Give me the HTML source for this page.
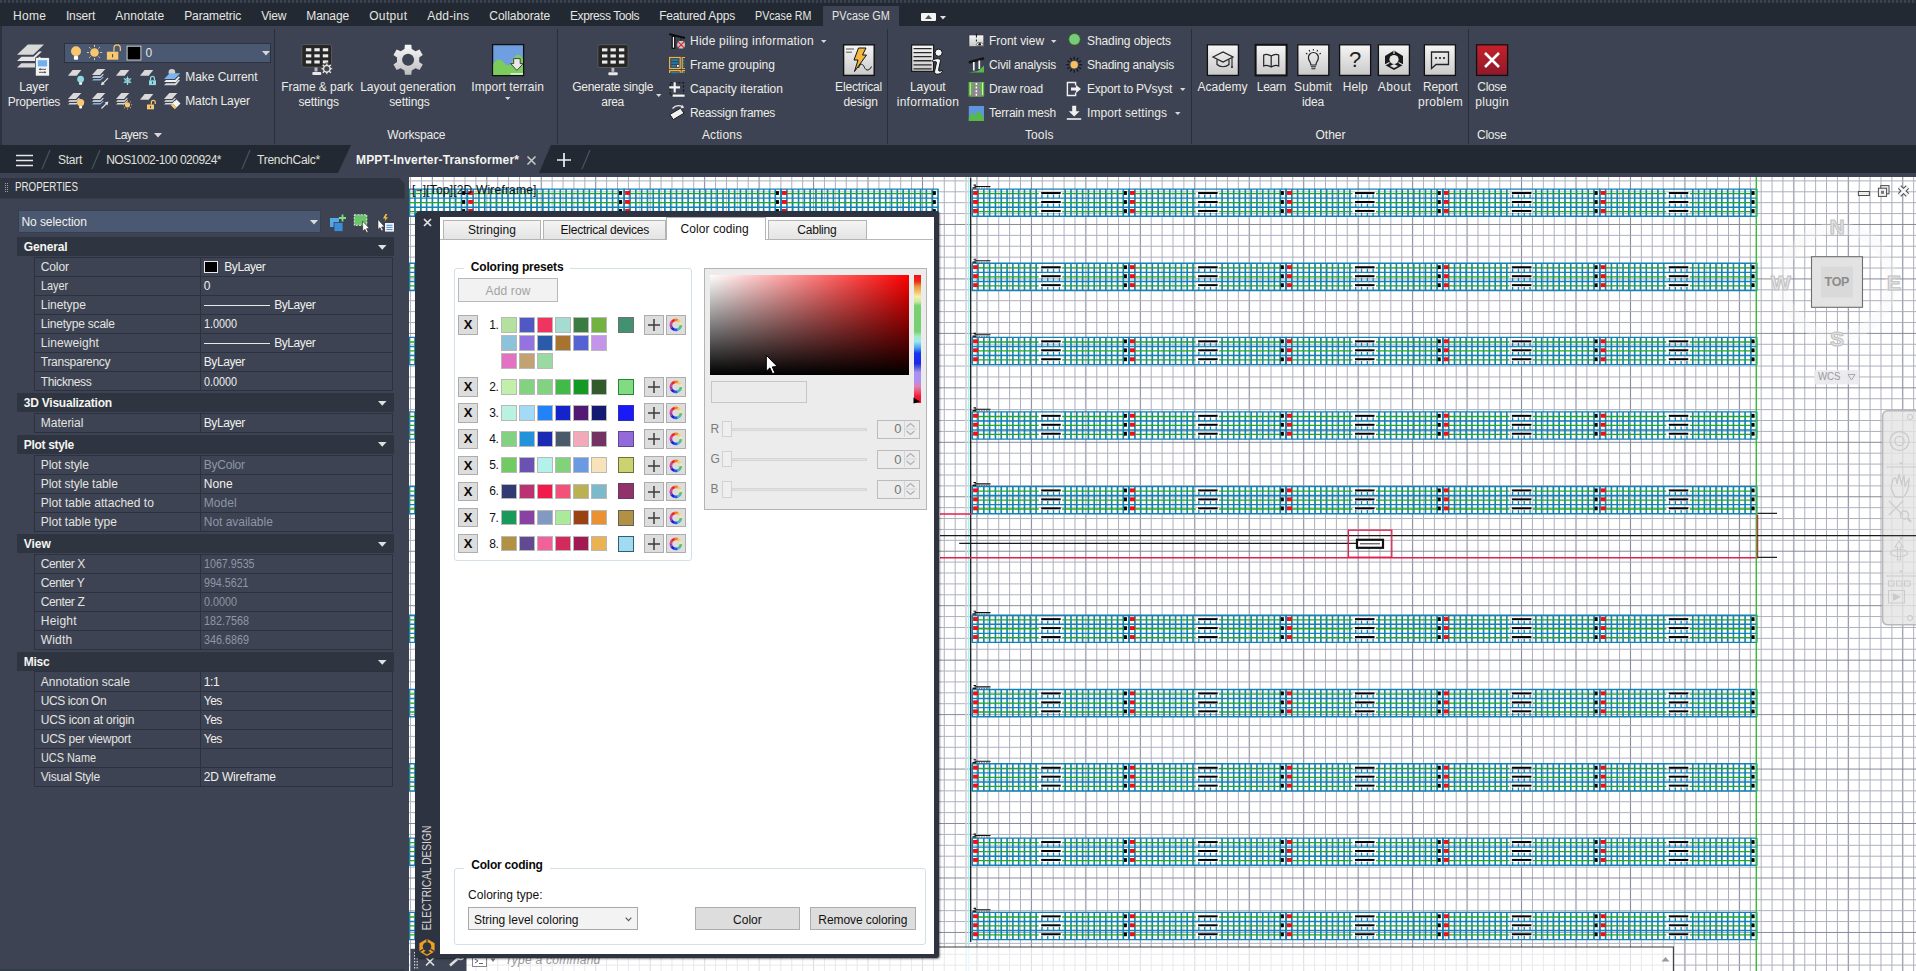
<!DOCTYPE html><html><head><meta charset="utf-8"><title>AutoCAD</title><style>html,body{margin:0;padding:0}body{width:1916px;height:971px;overflow:hidden;background:#3d4353;position:relative;font-family:"Liberation Sans",sans-serif;font-size:12px}
.a{position:absolute;display:block}.t{position:absolute;white-space:nowrap;display:block}svg{overflow:visible}</style></head><body>
<svg class="a" style="left:409.00px;top:176.00px;overflow:hidden;" width="1507" height="795" viewBox="0 0 1507 795"><defs><pattern id="gr" x="-472.246" y="-283.746" width="54.460" height="54.460" patternUnits="userSpaceOnUse"><path d="M5.446 0V54.460" stroke="#868899" stroke-width="1.1"/><path d="M16.338 0V54.460" stroke="#adafbd" stroke-width="1.0"/><path d="M27.230 0V54.460" stroke="#adafbd" stroke-width="1.0"/><path d="M38.122 0V54.460" stroke="#adafbd" stroke-width="1.0"/><path d="M49.014 0V54.460" stroke="#adafbd" stroke-width="1.0"/><path d="M0 5.446H54.460" stroke="#868899" stroke-width="1.1"/><path d="M0 16.338H54.460" stroke="#adafbd" stroke-width="1.0"/><path d="M0 27.230H54.460" stroke="#adafbd" stroke-width="1.0"/><path d="M0 38.122H54.460" stroke="#adafbd" stroke-width="1.0"/><path d="M0 49.014H54.460" stroke="#adafbd" stroke-width="1.0"/></pattern><g id="tb"><path d="M0.00 0.00V27.20" stroke="#1482b4" stroke-width="1.65"/><path d="M5.81 0.00V27.20" stroke="#1482b4" stroke-width="1.65"/><path d="M11.62 0.00V27.20" stroke="#1482b4" stroke-width="1.65"/><path d="M17.43 0.00V27.20" stroke="#1482b4" stroke-width="1.65"/><path d="M23.24 0.00V27.20" stroke="#1482b4" stroke-width="1.65"/><path d="M29.05 0.00V27.20" stroke="#1482b4" stroke-width="1.65"/><path d="M34.87 0.00V27.20" stroke="#1482b4" stroke-width="1.65"/><path d="M40.68 0.00V27.20" stroke="#1482b4" stroke-width="1.65"/><path d="M46.49 0.00V27.20" stroke="#1482b4" stroke-width="1.65"/><path d="M52.30 0.00V27.20" stroke="#1482b4" stroke-width="1.65"/><path d="M58.11 0.00V27.20" stroke="#1482b4" stroke-width="1.65"/><path d="M63.92 0.00V27.20" stroke="#1482b4" stroke-width="1.65"/><path d="M69.73 5.47V9.07" stroke="#1482b4" stroke-width="1.3"/><path d="M69.73 14.54V18.14" stroke="#1482b4" stroke-width="1.3"/><path d="M69.73 23.61V27.21" stroke="#1482b4" stroke-width="1.3"/><path d="M75.54 5.47V9.07" stroke="#1482b4" stroke-width="1.3"/><path d="M75.54 14.54V18.14" stroke="#1482b4" stroke-width="1.3"/><path d="M75.54 23.61V27.21" stroke="#1482b4" stroke-width="1.3"/><path d="M81.35 5.47V9.07" stroke="#1482b4" stroke-width="1.3"/><path d="M81.35 14.54V18.14" stroke="#1482b4" stroke-width="1.3"/><path d="M81.35 23.61V27.21" stroke="#1482b4" stroke-width="1.3"/><path d="M87.16 5.47V9.07" stroke="#1482b4" stroke-width="1.3"/><path d="M87.16 14.54V18.14" stroke="#1482b4" stroke-width="1.3"/><path d="M87.16 23.61V27.21" stroke="#1482b4" stroke-width="1.3"/><path d="M92.98 0.00V27.20" stroke="#1482b4" stroke-width="1.65"/><path d="M98.79 0.00V27.20" stroke="#1482b4" stroke-width="1.65"/><path d="M104.60 0.00V27.20" stroke="#1482b4" stroke-width="1.65"/><path d="M110.41 0.00V27.20" stroke="#1482b4" stroke-width="1.65"/><path d="M116.22 0.00V27.20" stroke="#1482b4" stroke-width="1.65"/><path d="M122.03 0.00V27.20" stroke="#1482b4" stroke-width="1.65"/><path d="M127.84 0.00V27.20" stroke="#1482b4" stroke-width="1.65"/><path d="M133.65 0.00V27.20" stroke="#1482b4" stroke-width="1.65"/><path d="M139.46 0.00V27.20" stroke="#1482b4" stroke-width="1.65"/><path d="M145.28 0.00V27.20" stroke="#1482b4" stroke-width="1.65"/><path d="M151.09 0.00V27.20" stroke="#1482b4" stroke-width="1.65"/><path d="M156.90 0.00V27.20" stroke="#1482b4" stroke-width="1.65"/><path d="M-0.50 0.00H157.40" stroke="#1482b4" stroke-width="1.4"/><path d="M-0.50 9.07H157.40" stroke="#1482b4" stroke-width="1.4"/><path d="M-0.50 18.14H157.40" stroke="#1482b4" stroke-width="1.4"/><path d="M-0.50 27.21H157.40" stroke="#1482b4" stroke-width="1.4"/><path d="M3.00 4.60H66.50M90.00 4.60H154.90" stroke="#22aa22" stroke-width="1.3"/><path d="M69.00 3.95H88.50" stroke="#000" stroke-width="2"/><rect x="0.90" y="1.90" width="5" height="3.9" fill="#f01010"/><rect x="151.70" y="2.00" width="3" height="3.8" fill="#000"/><path d="M3.00 13.55H66.50M90.00 13.55H154.90" stroke="#22aa22" stroke-width="1.3"/><path d="M69.00 12.90H88.50" stroke="#000" stroke-width="2"/><rect x="0.90" y="10.90" width="5" height="3.9" fill="#f01010"/><rect x="151.70" y="11.00" width="3" height="3.8" fill="#000"/><path d="M3.00 22.50H66.50M90.00 22.50H154.90" stroke="#22aa22" stroke-width="1.3"/><path d="M69.00 21.85H88.50" stroke="#000" stroke-width="2"/><rect x="0.90" y="19.90" width="5" height="3.9" fill="#f01010"/><rect x="151.70" y="20.00" width="3" height="3.8" fill="#000"/></g><g id="tn"><path d="M0.00 0.00V27.20" stroke="#1482b4" stroke-width="1.65"/><path d="M5.81 0.00V27.20" stroke="#1482b4" stroke-width="1.65"/><path d="M11.62 0.00V27.20" stroke="#1482b4" stroke-width="1.65"/><path d="M17.43 0.00V27.20" stroke="#1482b4" stroke-width="1.65"/><path d="M23.24 0.00V27.20" stroke="#1482b4" stroke-width="1.65"/><path d="M29.05 0.00V27.20" stroke="#1482b4" stroke-width="1.65"/><path d="M34.87 0.00V27.20" stroke="#1482b4" stroke-width="1.65"/><path d="M40.68 0.00V27.20" stroke="#1482b4" stroke-width="1.65"/><path d="M46.49 0.00V27.20" stroke="#1482b4" stroke-width="1.65"/><path d="M52.30 0.00V27.20" stroke="#1482b4" stroke-width="1.65"/><path d="M58.11 0.00V27.20" stroke="#1482b4" stroke-width="1.65"/><path d="M63.92 0.00V27.20" stroke="#1482b4" stroke-width="1.65"/><path d="M69.73 0.00V27.20" stroke="#1482b4" stroke-width="1.65"/><path d="M75.54 0.00V27.20" stroke="#1482b4" stroke-width="1.65"/><path d="M81.35 0.00V27.20" stroke="#1482b4" stroke-width="1.65"/><path d="M87.16 0.00V27.20" stroke="#1482b4" stroke-width="1.65"/><path d="M92.98 0.00V27.20" stroke="#1482b4" stroke-width="1.65"/><path d="M98.79 0.00V27.20" stroke="#1482b4" stroke-width="1.65"/><path d="M104.60 0.00V27.20" stroke="#1482b4" stroke-width="1.65"/><path d="M110.41 0.00V27.20" stroke="#1482b4" stroke-width="1.65"/><path d="M116.22 0.00V27.20" stroke="#1482b4" stroke-width="1.65"/><path d="M122.03 0.00V27.20" stroke="#1482b4" stroke-width="1.65"/><path d="M127.84 0.00V27.20" stroke="#1482b4" stroke-width="1.65"/><path d="M133.65 0.00V27.20" stroke="#1482b4" stroke-width="1.65"/><path d="M139.46 0.00V27.20" stroke="#1482b4" stroke-width="1.65"/><path d="M145.28 0.00V27.20" stroke="#1482b4" stroke-width="1.65"/><path d="M151.09 0.00V27.20" stroke="#1482b4" stroke-width="1.65"/><path d="M156.90 0.00V27.20" stroke="#1482b4" stroke-width="1.65"/><path d="M-0.50 0.00H157.40" stroke="#1482b4" stroke-width="1.4"/><path d="M-0.50 9.07H157.40" stroke="#1482b4" stroke-width="1.4"/><path d="M-0.50 18.14H157.40" stroke="#1482b4" stroke-width="1.4"/><path d="M-0.50 27.21H157.40" stroke="#1482b4" stroke-width="1.4"/><path d="M3.00 4.60H154.90" stroke="#22aa22" stroke-width="1.3"/><rect x="0.90" y="1.90" width="5" height="3.9" fill="#f01010"/><rect x="151.70" y="2.00" width="3" height="3.8" fill="#000"/><path d="M3.00 13.55H154.90" stroke="#22aa22" stroke-width="1.3"/><rect x="0.90" y="10.90" width="5" height="3.9" fill="#f01010"/><rect x="151.70" y="11.00" width="3" height="3.8" fill="#000"/><path d="M3.00 22.50H154.90" stroke="#22aa22" stroke-width="1.3"/><rect x="0.90" y="19.90" width="5" height="3.9" fill="#f01010"/><rect x="151.70" y="20.00" width="3" height="3.8" fill="#000"/></g><g id="row4"><rect width="627.60" height="27.2" fill="#fff" fill-opacity="0.25"/><use href="#tn" x="0.00"/><use href="#tn" x="156.90"/><use href="#tn" x="313.80"/><use href="#tn" x="470.70"/></g><g id="row5"><rect width="784.50" height="27.2" fill="#fff" fill-opacity="0.25"/><use href="#tb" x="0.00"/><use href="#tb" x="156.90"/><use href="#tb" x="313.80"/><use href="#tb" x="470.70"/><use href="#tb" x="627.60"/></g></defs><rect width="1507" height="795" fill="#fff"/><rect width="1507" height="795" fill="url(#gr)"/><g transform="translate(-409,-176)"><path d="M966.1 176V971" stroke="#dedede" stroke-width="1.4"/><path d="M968.6 176V971" stroke="#a6f0f6" stroke-width="1.5"/><path d="M970.7 177.5V942" stroke="#1a1a1a" stroke-width="1.3"/><use href="#row5" x="972.2" y="189.10"/><path d="M974.5 186.50H990.5M973.5 185.10h2.5" stroke="#111" stroke-width="1.1"/><path d="M972.5 187.90h3.5" stroke="#111" stroke-width="1.4"/><path d="M976 188.00H990" stroke="#666" stroke-width="0.9" stroke-dasharray="1.5 1"/><use href="#row5" x="972.2" y="263.30"/><path d="M974.5 260.70H990.5M973.5 259.30h2.5" stroke="#111" stroke-width="1.1"/><path d="M972.5 262.10h3.5" stroke="#111" stroke-width="1.4"/><path d="M976 262.20H990" stroke="#666" stroke-width="0.9" stroke-dasharray="1.5 1"/><use href="#row5" x="972.2" y="337.40"/><path d="M974.5 334.80H990.5M973.5 333.40h2.5" stroke="#111" stroke-width="1.1"/><path d="M972.5 336.20h3.5" stroke="#111" stroke-width="1.4"/><path d="M976 336.30H990" stroke="#666" stroke-width="0.9" stroke-dasharray="1.5 1"/><use href="#row5" x="972.2" y="411.90"/><path d="M974.5 409.30H990.5M973.5 407.90h2.5" stroke="#111" stroke-width="1.1"/><path d="M972.5 410.70h3.5" stroke="#111" stroke-width="1.4"/><path d="M976 410.80H990" stroke="#666" stroke-width="0.9" stroke-dasharray="1.5 1"/><use href="#row5" x="972.2" y="486.50"/><path d="M974.5 483.90H990.5M973.5 482.50h2.5" stroke="#111" stroke-width="1.1"/><path d="M972.5 485.30h3.5" stroke="#111" stroke-width="1.4"/><path d="M976 485.40H990" stroke="#666" stroke-width="0.9" stroke-dasharray="1.5 1"/><use href="#row5" x="972.2" y="615.20"/><path d="M974.5 612.60H990.5M973.5 611.20h2.5" stroke="#111" stroke-width="1.1"/><path d="M972.5 614.00h3.5" stroke="#111" stroke-width="1.4"/><path d="M976 614.10H990" stroke="#666" stroke-width="0.9" stroke-dasharray="1.5 1"/><use href="#row5" x="972.2" y="689.50"/><path d="M974.5 686.90H990.5M973.5 685.50h2.5" stroke="#111" stroke-width="1.1"/><path d="M972.5 688.30h3.5" stroke="#111" stroke-width="1.4"/><path d="M976 688.40H990" stroke="#666" stroke-width="0.9" stroke-dasharray="1.5 1"/><use href="#row5" x="972.2" y="763.80"/><path d="M974.5 761.20H990.5M973.5 759.80h2.5" stroke="#111" stroke-width="1.1"/><path d="M972.5 762.60h3.5" stroke="#111" stroke-width="1.4"/><path d="M976 762.70H990" stroke="#666" stroke-width="0.9" stroke-dasharray="1.5 1"/><use href="#row5" x="972.2" y="838.10"/><path d="M974.5 835.50H990.5M973.5 834.10h2.5" stroke="#111" stroke-width="1.1"/><path d="M972.5 836.90h3.5" stroke="#111" stroke-width="1.4"/><path d="M976 837.00H990" stroke="#666" stroke-width="0.9" stroke-dasharray="1.5 1"/><use href="#row5" x="972.2" y="912.40"/><path d="M974.5 909.80H990.5M973.5 908.40h2.5" stroke="#111" stroke-width="1.1"/><path d="M972.5 911.20h3.5" stroke="#111" stroke-width="1.4"/><path d="M976 911.30H990" stroke="#666" stroke-width="0.9" stroke-dasharray="1.5 1"/><use href="#row4" x="310.40" y="189.10"/><use href="#row4" x="310.40" y="263.30"/><use href="#row4" x="310.40" y="337.40"/><use href="#row4" x="310.40" y="411.90"/><use href="#row4" x="310.40" y="486.50"/><use href="#row4" x="310.40" y="615.20"/><use href="#row4" x="310.40" y="689.50"/><use href="#row4" x="310.40" y="763.80"/><use href="#row4" x="310.40" y="838.10"/><use href="#row4" x="310.40" y="912.40"/><path d="M940 513.9H972.5M1757.5 514.5V557.8H940" fill="none" stroke="#e0204c" stroke-width="1.5"/><path d="M1757.5 513.3H1777M1757.5 557.3H1777" stroke="#222" stroke-width="1.2"/><path d="M940 535.6H1916" stroke="#1a1a1a" stroke-width="1.3"/><path d="M959.2 543.3H1357" stroke="#1a1a1a" stroke-width="1.3"/><rect x="1348.4" y="530.2" width="43.4" height="27" fill="none" stroke="#e0204c" stroke-width="1.3"/><rect x="1357" y="539.8" width="26" height="8" fill="#fff" stroke="#111" stroke-width="2.2"/><path d="M1360 543.8H1380" stroke="#333" stroke-width="1"/><path d="M1756.3 176V971" stroke="#2fbf2f" stroke-width="1.4"/></g></svg>
<div class="a" style="left:0.00px;top:0.00px;width:1916.00px;height:26.00px;background:#222933;"></div>
<div class="a" style="left:0.00px;top:0.00px;width:1916.00px;height:2.50px;background:repeating-linear-gradient(90deg,#5a6272 0 2px,#2c3340 2px 4px);opacity:.45"></div>
<div class="a" style="left:823.00px;top:6.00px;width:76.00px;height:20.00px;background:#3d4353;"></div>
<span class="t" style="left:13.00px;top:8.00px;font-size:12px;line-height:16px;color:#e6e6e0;letter-spacing:0.346px;">Home</span>
<span class="t" style="left:65.90px;top:8.00px;font-size:12px;line-height:16px;color:#e6e6e0;letter-spacing:-0.117px;">Insert</span>
<span class="t" style="left:115.30px;top:8.00px;font-size:12px;line-height:16px;color:#e6e6e0;letter-spacing:0.111px;">Annotate</span>
<span class="t" style="left:184.20px;top:8.00px;font-size:12px;line-height:16px;color:#e6e6e0;letter-spacing:-0.112px;">Parametric</span>
<span class="t" style="left:261.20px;top:8.00px;font-size:12px;line-height:16px;color:#e6e6e0;letter-spacing:-0.199px;">View</span>
<span class="t" style="left:306.30px;top:8.00px;font-size:12px;line-height:16px;color:#e6e6e0;letter-spacing:-0.093px;">Manage</span>
<span class="t" style="left:369.20px;top:8.00px;font-size:12px;line-height:16px;color:#e6e6e0;letter-spacing:0.350px;">Output</span>
<span class="t" style="left:427.30px;top:8.00px;font-size:12px;line-height:16px;color:#e6e6e0;letter-spacing:0.173px;">Add-ins</span>
<span class="t" style="left:489.30px;top:8.00px;font-size:12px;line-height:16px;color:#e6e6e0;letter-spacing:-0.052px;">Collaborate</span>
<span class="t" style="left:570.00px;top:8.00px;font-size:12px;line-height:16px;color:#e6e6e0;letter-spacing:-0.405px;">Express Tools</span>
<span class="t" style="left:659.20px;top:8.00px;font-size:12px;line-height:16px;color:#e6e6e0;letter-spacing:-0.172px;">Featured Apps</span>
<span class="t" style="left:755.40px;top:8.00px;font-size:12px;line-height:16px;color:#e6e6e0;transform:scaleX(0.8904);transform-origin:0 50%;">PVcase RM</span>
<span class="t" style="left:832.20px;top:8.00px;font-size:12px;line-height:16px;color:#e6e6e0;transform:scaleX(0.9031);transform-origin:0 50%;">PVcase GM</span>
<div class="a" style="left:921.00px;top:13.00px;width:15.00px;height:8.00px;background:#f4f4f4;border-radius:1px"></div>
<svg class="a" style="left:925.00px;top:15.00px;" width="7" height="4" viewBox="0 0 7 4"><path d="M0 4L3.5 0L7 4Z" fill="#555"/></svg>
<svg class="a" style="left:939.50px;top:15.75px;" width="6" height="3.5" viewBox="0 0 6 3.5"><path d="M0 0H6L3.0 3.5Z" fill="#e0e0e0"/></svg>
<div class="a" style="left:0.00px;top:26.00px;width:1916.00px;height:119.00px;background:#3d4353;"></div>
<div class="a" style="left:0.00px;top:26.00px;width:2.00px;height:119.00px;background:#222933;opacity:.6"></div>
<div class="a" style="left:274.10px;top:29.00px;width:1.30px;height:115.00px;background:#282e3a;"></div>
<div class="a" style="left:556.60px;top:29.00px;width:1.30px;height:115.00px;background:#282e3a;"></div>
<div class="a" style="left:886.80px;top:29.00px;width:1.30px;height:115.00px;background:#282e3a;"></div>
<div class="a" style="left:1190.80px;top:29.00px;width:1.30px;height:115.00px;background:#282e3a;"></div>
<div class="a" style="left:1467.60px;top:29.00px;width:1.30px;height:115.00px;background:#282e3a;"></div>
<span class="t" style="left:114.50px;top:127.00px;font-size:12px;line-height:16px;color:#ecece6;letter-spacing:-0.503px;">Layers</span>
<svg class="a" style="left:153.50px;top:133.25px;" width="8" height="4.5" viewBox="0 0 8 4.5"><path d="M0 0H8L4.0 4.5Z" fill="#d8d8d8"/></svg>
<span class="t" style="left:387.30px;top:127.00px;font-size:12px;line-height:16px;color:#ecece6;letter-spacing:-0.200px;">Workspace</span>
<span class="t" style="left:702.00px;top:127.00px;font-size:12px;line-height:16px;color:#ecece6;letter-spacing:0.094px;">Actions</span>
<span class="t" style="left:1025.00px;top:127.00px;font-size:12px;line-height:16px;color:#ecece6;letter-spacing:0.097px;">Tools</span>
<span class="t" style="left:1315.50px;top:127.00px;font-size:12px;line-height:16px;color:#ecece6;letter-spacing:0.000px;">Other</span>
<span class="t" style="left:1477.00px;top:127.00px;font-size:12px;line-height:16px;color:#ecece6;letter-spacing:-0.237px;">Close</span>
<span class="t" style="left:19.20px;top:79.00px;font-size:12px;line-height:16px;color:#ecece6;letter-spacing:-0.103px;">Layer</span>
<span class="t" style="left:7.64px;top:94.00px;font-size:12px;line-height:16px;color:#ecece6;letter-spacing:-0.219px;">Properties</span>
<span class="t" style="left:281.22px;top:79.00px;font-size:12px;line-height:16px;color:#ecece6;letter-spacing:-0.064px;">Frame &amp; park</span>
<span class="t" style="left:298.40px;top:94.00px;font-size:12px;line-height:16px;color:#ecece6;letter-spacing:-0.105px;">settings</span>
<span class="t" style="left:360.23px;top:79.00px;font-size:12px;line-height:16px;color:#ecece6;letter-spacing:-0.032px;">Layout generation</span>
<span class="t" style="left:389.20px;top:94.00px;font-size:12px;line-height:16px;color:#ecece6;letter-spacing:-0.105px;">settings</span>
<span class="t" style="left:471.34px;top:79.00px;font-size:12px;line-height:16px;color:#ecece6;letter-spacing:0.090px;">Import terrain</span>
<svg class="a" style="left:504.75px;top:97.30px;" width="5.5" height="3" viewBox="0 0 5.5 3"><path d="M0 0H5.5L2.75 3Z" fill="#d8d8d8"/></svg>
<span class="t" style="left:572.18px;top:79.00px;font-size:12px;line-height:16px;color:#ecece6;letter-spacing:-0.247px;">Generate single</span>
<span class="t" style="left:601.36px;top:94.00px;font-size:12px;line-height:16px;color:#ecece6;letter-spacing:-0.379px;">area</span>
<svg class="a" style="left:655.55px;top:94.00px;" width="5.5" height="3" viewBox="0 0 5.5 3"><path d="M0 0H5.5L2.75 3Z" fill="#d8d8d8"/></svg>
<span class="t" style="left:835.12px;top:79.00px;font-size:12px;line-height:16px;color:#ecece6;letter-spacing:-0.169px;">Electrical</span>
<span class="t" style="left:843.38px;top:94.00px;font-size:12px;line-height:16px;color:#ecece6;letter-spacing:-0.143px;">design</span>
<span class="t" style="left:910.01px;top:79.00px;font-size:12px;line-height:16px;color:#ecece6;letter-spacing:-0.086px;">Layout</span>
<span class="t" style="left:896.69px;top:94.00px;font-size:12px;line-height:16px;color:#ecece6;letter-spacing:0.286px;">information</span>
<span class="t" style="left:1197.50px;top:79.00px;font-size:12px;line-height:16px;color:#ecece6;letter-spacing:-0.002px;">Academy</span>
<span class="t" style="left:1256.83px;top:79.00px;font-size:12px;line-height:16px;color:#ecece6;letter-spacing:-0.338px;">Learn</span>
<span class="t" style="left:1294.05px;top:79.00px;font-size:12px;line-height:16px;color:#ecece6;letter-spacing:0.109px;">Submit</span>
<span class="t" style="left:1301.91px;top:94.00px;font-size:12px;line-height:16px;color:#ecece6;letter-spacing:-0.172px;">idea</span>
<span class="t" style="left:1342.84px;top:79.00px;font-size:12px;line-height:16px;color:#ecece6;letter-spacing:0.078px;">Help</span>
<span class="t" style="left:1377.77px;top:79.00px;font-size:12px;line-height:16px;color:#ecece6;letter-spacing:0.431px;">About</span>
<span class="t" style="left:1423.12px;top:79.00px;font-size:12px;line-height:16px;color:#ecece6;letter-spacing:-0.253px;">Report</span>
<span class="t" style="left:1418.12px;top:94.00px;font-size:12px;line-height:16px;color:#ecece6;letter-spacing:0.234px;">problem</span>
<span class="t" style="left:1477.33px;top:79.00px;font-size:12px;line-height:16px;color:#ecece6;letter-spacing:-0.338px;">Close</span>
<span class="t" style="left:1475.37px;top:94.00px;font-size:12px;line-height:16px;color:#ecece6;letter-spacing:0.245px;">plugin</span>
<div class="a" style="left:64.10px;top:42.50px;width:207.40px;height:20.80px;background:#4b5872;border:1px solid #2c3240;box-sizing:border-box;"></div>
<span class="t" style="left:145.50px;top:45.00px;font-size:12px;line-height:16px;color:#e6e6e0;">0</span>
<svg class="a" style="left:261.50px;top:50.75px;" width="8" height="4.5" viewBox="0 0 8 4.5"><path d="M0 0H8L4.0 4.5Z" fill="#d8d8d8"/></svg>
<span class="t" style="left:185.20px;top:69.00px;font-size:12px;line-height:16px;color:#ecece6;letter-spacing:-0.032px;">Make Current</span>
<span class="t" style="left:185.20px;top:93.00px;font-size:12px;line-height:16px;color:#ecece6;letter-spacing:-0.111px;">Match Layer</span>
<span class="t" style="left:690.00px;top:33.00px;font-size:12px;line-height:16px;color:#ecece6;letter-spacing:0.220px;">Hide piling information</span>
<svg class="a" style="left:821.25px;top:40.00px;" width="5.5" height="3" viewBox="0 0 5.5 3"><path d="M0 0H5.5L2.75 3Z" fill="#d8d8d8"/></svg>
<span class="t" style="left:690.00px;top:57.00px;font-size:12px;line-height:16px;color:#ecece6;letter-spacing:0.021px;">Frame grouping</span>
<span class="t" style="left:690.00px;top:81.00px;font-size:12px;line-height:16px;color:#ecece6;letter-spacing:0.016px;">Capacity iteration</span>
<span class="t" style="left:690.00px;top:105.00px;font-size:12px;line-height:16px;color:#ecece6;letter-spacing:-0.335px;">Reassign frames</span>
<span class="t" style="left:989.00px;top:33.00px;font-size:12px;line-height:16px;color:#ecece6;letter-spacing:-0.034px;">Front view</span>
<svg class="a" style="left:1051.25px;top:40.00px;" width="5.5" height="3" viewBox="0 0 5.5 3"><path d="M0 0H5.5L2.75 3Z" fill="#d8d8d8"/></svg>
<span class="t" style="left:989.00px;top:57.00px;font-size:12px;line-height:16px;color:#ecece6;letter-spacing:-0.170px;">Civil analysis</span>
<span class="t" style="left:989.00px;top:81.00px;font-size:12px;line-height:16px;color:#ecece6;letter-spacing:-0.151px;">Draw road</span>
<span class="t" style="left:989.00px;top:105.00px;font-size:12px;line-height:16px;color:#ecece6;letter-spacing:-0.197px;">Terrain mesh</span>
<span class="t" style="left:1087.00px;top:33.00px;font-size:12px;line-height:16px;color:#ecece6;letter-spacing:-0.092px;">Shading objects</span>
<span class="t" style="left:1087.00px;top:57.00px;font-size:12px;line-height:16px;color:#ecece6;letter-spacing:-0.232px;">Shading analysis</span>
<span class="t" style="left:1087.00px;top:81.00px;font-size:12px;line-height:16px;color:#ecece6;letter-spacing:-0.229px;">Export to PVsyst</span>
<svg class="a" style="left:1179.75px;top:88.00px;" width="5.5" height="3" viewBox="0 0 5.5 3"><path d="M0 0H5.5L2.75 3Z" fill="#d8d8d8"/></svg>
<span class="t" style="left:1087.00px;top:105.00px;font-size:12px;line-height:16px;color:#ecece6;letter-spacing:0.089px;">Import settings</span>
<svg class="a" style="left:1174.75px;top:112.00px;" width="5.5" height="3" viewBox="0 0 5.5 3"><path d="M0 0H5.5L2.75 3Z" fill="#d8d8d8"/></svg>
<div class="a" style="left:0.00px;top:145.00px;width:1916.00px;height:27.50px;background:#222933;"></div>
<div class="a" style="left:0.00px;top:172.50px;width:1916.00px;height:4.00px;background:#3d4353;"></div>
<svg class="a" style="left:338.00px;top:145.00px;" width="214" height="28" viewBox="0 0 214 28"><path d="M0 28L13 0H213L201 28Z" fill="#3d4353"/></svg>
<svg class="a" style="left:41.00px;top:149.00px;" width="10" height="21" viewBox="0 0 10 21"><path d="M1 20L9 1" stroke="#4a5264" stroke-width="1.2" fill="none"/></svg>
<svg class="a" style="left:91.00px;top:149.00px;" width="10" height="21" viewBox="0 0 10 21"><path d="M1 20L9 1" stroke="#4a5264" stroke-width="1.2" fill="none"/></svg>
<svg class="a" style="left:241.00px;top:149.00px;" width="10" height="21" viewBox="0 0 10 21"><path d="M1 20L9 1" stroke="#4a5264" stroke-width="1.2" fill="none"/></svg>
<svg class="a" style="left:581.00px;top:149.00px;" width="10" height="21" viewBox="0 0 10 21"><path d="M1 20L9 1" stroke="#4a5264" stroke-width="1.2" fill="none"/></svg>
<svg class="a" style="left:16.00px;top:153.50px;" width="17" height="13" viewBox="0 0 17 13"><path d="M0 1.5H17M0 6.5H17M0 11.5H17" stroke="#e8e8e8" stroke-width="1.6"/></svg>
<span class="t" style="left:58.00px;top:152.00px;font-size:12px;line-height:16px;color:#e0e0dc;letter-spacing:-0.266px;">Start</span>
<span class="t" style="left:106.20px;top:152.00px;font-size:12px;line-height:16px;color:#e0e0dc;letter-spacing:-0.523px;">NOS1002-100 020924*</span>
<span class="t" style="left:257.00px;top:152.00px;font-size:12px;line-height:16px;color:#e0e0dc;letter-spacing:-0.236px;">TrenchCalc*</span>
<span class="t" style="left:356.00px;top:152.00px;font-size:12px;line-height:16px;color:#f4f4f0;letter-spacing:0.139px;font-weight:bold;">MPPT-Inverter-Transformer*</span>
<svg class="a" style="left:527.00px;top:155.50px;" width="9" height="9" viewBox="0 0 9 9"><path d="M0.5 0.5L8.5 8.5M8.5 0.5L0.5 8.5" stroke="#c8c8c8" stroke-width="1.6"/></svg>
<svg class="a" style="left:556.50px;top:153.00px;" width="14" height="14" viewBox="0 0 14 14"><path d="M7 0V14M0 7H14" stroke="#f0f0f0" stroke-width="1.7"/></svg>
<svg class="a" style="left:0.00px;top:0.00px;" width="280" height="146" viewBox="0 0 280 146"><path d="M17 54.8L27.8 44.5H44L33.2 54.8Z" fill="#d9d9d9"/><path d="M17 61L21.5 56.8H33.5L39 51.5H42L35 58V61Z" fill="#e6e6e6"/><path d="M17 67.5L21.5 63.3H35V67.5Z" fill="#d9d9d9"/><rect x="35.8" y="57.9" width="13.3" height="17.8" fill="#f2f2f2"/><rect x="37.8" y="60.2" width="9.3" height="6.2" fill="#6fb0f0"/><path d="M39 69.3H46M39 72.3H46" stroke="#444" stroke-width="0.9"/><path d="M39 69.3l1.6 -1.3v2.6zM46 72.3l-1.6 -1.3v2.6z" fill="#444"/><rect x="38.5" y="56.9" width="2" height="1" fill="#f2f2f2"/><circle cx="76" cy="51.3" r="5" fill="#f8c870"/><rect x="73.9" y="56.0" width="4.2" height="3.8" rx="0.8" fill="#fff"/><circle cx="94.5" cy="52.5" r="4.3" fill="#f8c870"/><path d="M100.10 52.50L102.10 52.50" stroke="#f8c870" stroke-width="1"/><path d="M98.46 56.46L99.87 57.87" stroke="#f8c870" stroke-width="1"/><path d="M94.50 58.10L94.50 60.10" stroke="#f8c870" stroke-width="1"/><path d="M90.54 56.46L89.13 57.87" stroke="#f8c870" stroke-width="1"/><path d="M88.90 52.50L86.90 52.50" stroke="#f8c870" stroke-width="1"/><path d="M90.54 48.54L89.13 47.13" stroke="#f8c870" stroke-width="1"/><path d="M94.50 46.90L94.50 44.90" stroke="#f8c870" stroke-width="1"/><path d="M98.46 48.54L99.87 47.13" stroke="#f8c870" stroke-width="1"/><rect x="106.9" y="51.7" width="11.4" height="8" fill="#f8c870"/><path d="M113.97 51.7V48.10a3.19 3.19 0 0 1 6.38 0V50.90" fill="none" stroke="#f8c870" stroke-width="1.2"/><rect x="112.10" y="54.10" width="1" height="3.20" fill="#3d4353"/><rect x="127.1" y="46.2" width="13.8" height="13.8" fill="#000" stroke="#d0d0d0" stroke-width="1"/><path d="M68.00 75.70L72.60 70.00H81.30L76.70 75.70Z" fill="#d9d9d9"/><circle cx="80.6" cy="79.2" r="3.4" fill="#8fd8e0"/><rect x="79.1" y="82.30000000000001" width="3" height="2.5" rx="0.8" fill="#fff"/><path d="M92.00 75.10L97.30 69.00H105.30L100.00 75.10Z" fill="#d9d9d9"/><path d="M92.00 77.80L93.60 76.20H100.60L102.40 74.20L104.00 74.20L100.40 77.80Z" fill="#f0f0f0"/><path d="M92.00 80.60L93.60 79.00H100.60L102.40 77.00L104.00 77.00L100.40 80.60Z" fill="#7db4ee"/><path d="M108 78.2L101.6 84.6" stroke="#e8e8e8" stroke-width="1.2"/><path d="M101 85.2L102 81.4L104.8 84.2Z" fill="#e8e8e8"/><path d="M116.00 75.70L120.60 70.00H129.30L124.70 75.70Z" fill="#d9d9d9"/><path d="M127.50 85.00L127.50 76.40" stroke="#8fd8e0" stroke-width="1.1"/><path d="M123.78 82.85L131.22 78.55" stroke="#8fd8e0" stroke-width="1.1"/><path d="M123.78 78.55L131.22 82.85" stroke="#8fd8e0" stroke-width="1.1"/><circle cx="127.5" cy="80.7" r="2.37" fill="none" stroke="#8fd8e0" stroke-width="1"/><path d="M140.00 75.70L144.60 70.00H153.30L148.70 75.70Z" fill="#d9d9d9"/><rect x="149" y="80.3" width="7" height="4.8" fill="#8fd8e0"/><path d="M150.54 80.3V78.38a1.96 1.96 0 0 1 3.92 0V80.3" fill="none" stroke="#8fd8e0" stroke-width="1.2"/><rect x="152.00" y="81.74" width="1" height="1.92" fill="#3d4353"/><circle cx="171.9" cy="72.3" r="3.3" fill="#cfcfcf"/><path d="M164.00 78.90L169.70 73.20H180.30L174.60 78.90Z" fill="#7db4ee"/><path d="M164 82L166 80H175L178.5 76.5L180 77L176 82Z" fill="#f0f0f0"/><path d="M164 85.2L166 83.2H175L178.5 79.7L180 80.2L176 85.2Z" fill="#d9d9d9"/><path d="M68.00 99.10L73.30 93.00H81.30L76.00 99.10Z" fill="#d9d9d9"/><path d="M68.00 101.80L69.60 100.20H76.60L78.40 98.20L80.00 98.20L76.40 101.80Z" fill="#f0f0f0"/><path d="M68.00 104.60L69.60 103.00H76.60L78.40 101.00L80.00 101.00L76.40 104.60Z" fill="#d9d9d9"/><circle cx="80.6" cy="102.6" r="3.6" fill="#f8c870"/><rect x="79.1" y="105.89999999999999" width="3" height="2.5" rx="0.8" fill="#fff"/><path d="M92.00 99.10L97.30 93.00H105.30L100.00 99.10Z" fill="#d9d9d9"/><path d="M92.00 101.80L93.60 100.20H100.60L102.40 98.20L104.00 98.20L100.40 101.80Z" fill="#f0f0f0"/><path d="M92.00 104.60L93.60 103.00H100.60L102.40 101.00L104.00 101.00L100.40 104.60Z" fill="#7db4ee"/><path d="M101.5 108.5L107.6 102.4" stroke="#e8e8e8" stroke-width="1.2"/><path d="M108.4 101.6L107.4 105.4L104.6 102.6Z" fill="#e8e8e8"/><path d="M116.00 99.10L121.30 93.00H129.30L124.00 99.10Z" fill="#d9d9d9"/><path d="M116.00 101.80L117.60 100.20H124.60L126.40 98.20L128.00 98.20L124.40 101.80Z" fill="#f0f0f0"/><path d="M116.00 104.60L117.60 103.00H124.60L126.40 101.00L128.00 101.00L124.40 104.60Z" fill="#d9d9d9"/><circle cx="127.5" cy="104.8" r="2.6" fill="#f8c870"/><path d="M131.30 104.80L132.10 104.80" stroke="#f8c870" stroke-width="1.1"/><path d="M130.19 107.49L130.75 108.05" stroke="#f8c870" stroke-width="1.1"/><path d="M127.50 108.60L127.50 109.40" stroke="#f8c870" stroke-width="1.1"/><path d="M124.81 107.49L124.25 108.05" stroke="#f8c870" stroke-width="1.1"/><path d="M123.70 104.80L122.90 104.80" stroke="#f8c870" stroke-width="1.1"/><path d="M124.81 102.11L124.25 101.55" stroke="#f8c870" stroke-width="1.1"/><path d="M127.50 101.00L127.50 100.20" stroke="#f8c870" stroke-width="1.1"/><path d="M130.19 102.11L130.75 101.55" stroke="#f8c870" stroke-width="1.1"/><path d="M140.00 99.70L144.60 94.00H153.30L148.70 99.70Z" fill="#d9d9d9"/><rect x="147" y="104.5" width="7" height="4.8" fill="#f8c870"/><path d="M151.34 104.5V102.34a1.96 1.96 0 0 1 3.92 0V104.02" fill="none" stroke="#f8c870" stroke-width="1.2"/><rect x="150.00" y="105.94" width="1" height="1.92" fill="#3d4353"/><path d="M164.00 99.10L169.30 93.00H177.30L172.00 99.10Z" fill="#d9d9d9"/><path d="M164.00 101.80L165.60 100.20H172.60L174.40 98.20L176.00 98.20L172.40 101.80Z" fill="#f0f0f0"/><path d="M164.00 104.60L165.60 103.00H172.60L174.40 101.00L176.00 101.00L172.40 104.60Z" fill="#d9d9d9"/><path d="M172.5 103.5L176.5 99.5L180.5 103.5L176.5 107.5Z" fill="#f4f4f4"/><path d="M170.8 105.2L172.5 103.5L176.5 107.5L174.8 109.2Z" fill="#f8c870"/></svg>
<svg class="a" style="left:0.00px;top:0.00px;" width="1916" height="146" viewBox="0 0 1916 146"><defs><linearGradient id="gb" x1="0" y1="0" x2="0" y2="1"><stop offset="0" stop-color="#f6f6f6"/><stop offset="1" stop-color="#c9c9c9"/></linearGradient><linearGradient id="gr2" x1="0" y1="0" x2="0" y2="1"><stop offset="0" stop-color="#c8202a"/><stop offset="1" stop-color="#8c1a2c"/></linearGradient><linearGradient id="gg" x1="0" y1="0" x2="0" y2="1"><stop offset="0" stop-color="#f8f8f8"/><stop offset="1" stop-color="#bdbdbd"/></linearGradient></defs><rect x="301.8" y="44.6" width="29.8" height="22.6" rx="2" fill="#262626" stroke="#5a5a5a" stroke-width="1"/><rect x="305.90" y="48.20" width="5.4" height="3.1" fill="#ececec"/><rect x="314.35" y="48.20" width="5.4" height="3.1" fill="#ececec"/><rect x="322.80" y="48.20" width="5.4" height="3.1" fill="#ececec"/><rect x="305.90" y="54.30" width="5.4" height="3.1" fill="#ececec"/><rect x="314.35" y="54.30" width="5.4" height="3.1" fill="#ececec"/><rect x="322.80" y="54.30" width="5.4" height="3.1" fill="#ececec"/><rect x="305.90" y="60.40" width="5.4" height="3.1" fill="#ececec"/><rect x="314.35" y="60.40" width="5.4" height="3.1" fill="#ececec"/><rect x="322.80" y="60.40" width="5.4" height="3.1" fill="#ececec"/><rect x="314.5" y="67.5" width="3" height="4" fill="#bbb"/><rect x="312.3" y="72" width="9" height="3" rx="1" fill="#e8e8e8"/><path d="M325.73 64.53L325.86 62.87L327.74 62.87L327.87 64.53L329.06 65.03L330.33 63.95L331.65 65.27L330.57 66.54L331.07 67.73L332.73 67.86L332.73 69.74L331.07 69.87L330.57 71.06L331.65 72.33L330.33 73.65L329.06 72.57L327.87 73.07L327.74 74.73L325.86 74.73L325.73 73.07L324.54 72.57L323.27 73.65L321.95 72.33L323.03 71.06L322.53 69.87L320.87 69.74L320.87 67.86L322.53 67.73L323.03 66.54L321.95 65.27L323.27 63.95L324.54 65.03Z" fill="#e2e2e2" stroke="#333" stroke-width="0.8"/><circle cx="326.8" cy="68.8" r="2.3" fill="#3d4353" stroke="#333" stroke-width="0.6"/><path d="M404.47 49.10L404.90 44.74L411.30 44.74L411.73 49.10L415.55 51.30L419.54 49.50L422.75 55.04L419.18 57.60L419.18 62.00L422.75 64.56L419.54 70.10L415.55 68.30L411.73 70.50L411.30 74.86L404.90 74.86L404.47 70.50L400.65 68.30L396.66 70.10L393.45 64.56L397.02 62.00L397.02 57.60L393.45 55.04L396.66 49.50L400.65 51.30Z" fill="url(#gg)"/><circle cx="408.1" cy="59.8" r="6" fill="#3d4353"/><rect x="492.6" y="44.6" width="31" height="31" fill="#6f9fe0" stroke="#111" stroke-width="1.3"/><path d="M493.3 64C496 58.5 500.5 58 503.5 62S509.5 68 512.5 60.5S519.5 53.5 523 59V75H493.3Z" fill="#7ccc5c"/><path d="M513.7 58.6h6.5v5h3l-6.3 6.8l-6.3-6.8h3.1z" fill="#e8e8e8" stroke="#222" stroke-width="0.8"/><path d="M510.5 73.9H523" stroke="#f4f4f4" stroke-width="1.4"/><rect x="597.9" y="44.7" width="30.2" height="22.8" rx="2" fill="#262626" stroke="#5a5a5a" stroke-width="1"/><rect x="602.00" y="48.30" width="5.4" height="3.1" fill="#ececec"/><rect x="610.45" y="48.30" width="5.4" height="3.1" fill="#ececec"/><rect x="618.90" y="48.30" width="5.4" height="3.1" fill="#ececec"/><rect x="602.00" y="54.40" width="5.4" height="3.1" fill="#ececec"/><rect x="610.45" y="54.40" width="5.4" height="3.1" fill="#ececec"/><rect x="618.90" y="54.40" width="5.4" height="3.1" fill="#ececec"/><rect x="602.00" y="60.50" width="5.4" height="3.1" fill="#ececec"/><rect x="610.45" y="60.50" width="5.4" height="3.1" fill="#ececec"/><rect x="618.90" y="60.50" width="5.4" height="3.1" fill="#ececec"/><rect x="611.5" y="67.8" width="2.8" height="4" fill="#bbb"/><rect x="608.4" y="72.3" width="9.3" height="3" rx="1" fill="#e8e8e8"/><path d="M669.2 34.2L685 38" stroke="#0a0a0a" stroke-width="1.8"/><rect x="672.2" y="36.3" width="2.5" height="12" fill="#f8f8f8" stroke="#0a0a0a" stroke-width="1.2"/><circle cx="681.1" cy="44.7" r="3.9" fill="#c8c8c8"/><path d="M678 41.6L684.2 47.8M684.2 41.6L678 47.8" stroke="#e02020" stroke-width="1.1"/><path d="M681 38.5V41" stroke="#111" stroke-width="0.8"/><rect x="669.6" y="57.5" width="10.6" height="11" fill="none" stroke="#f0b040" stroke-width="1.2"/><path d="M671.3 60.2H678.5M671.3 63H678.5M671.3 65.8H676" stroke="#1a84ac" stroke-width="1.7"/><rect x="677" y="65" width="1.8" height="1.8" fill="#fff"/><path d="M685 57.5H682.2V68.5H685M669.6 73V70.6H680.2V73M682.2 73V70.6H685" fill="none" stroke="#f0b040" stroke-width="1.2"/><path d="M683.7 59.5V67" stroke="#1a84ac" stroke-width="1.2" stroke-dasharray="2 1"/><path d="M671.3 72.6H678.5M683.2 72.6H685" stroke="#1a84ac" stroke-width="1.2"/><rect x="670.2" y="82.6" width="13.3" height="12.6" fill="none" stroke="#1c1c1c" stroke-width="1.3" stroke-dasharray="2.4 1.6"/><path d="M669.3 87.4H680M674.7 82.2V92.6M672.6 95.6H684.6" stroke="#f6f6f6" stroke-width="2.1"/><path d="M669.8 114.5L680.5 108.2L684 113.2L673.3 119.6Z" fill="#f0f0f0" stroke="#1c1c1c" stroke-width="1"/><path d="M672.5 108.5C675 105.5 679 105 682.5 106.6" fill="none" stroke="#e8e8e8" stroke-width="1.2"/><path d="M684.3 107.6L680.6 108.6L682 104.8Z" fill="#e8e8e8"/><rect x="843.6" y="44.8" width="30.6" height="30.6" fill="url(#gb)" stroke="#111" stroke-width="1.4"/><path d="M846 49H854M846 52.2H852" stroke="#444" stroke-width="0.9"/><path d="M858.5 48L866 48L862.5 55L866.5 55L854.5 71.5L858 60L854 60Z" fill="#f4b840" stroke="#111" stroke-width="1"/><path d="M858.5 68C860.5 62 863 64 864.5 67.5S869.5 71 871.5 66.5" fill="none" stroke="#111" stroke-width="1"/><rect x="911.6" y="45" width="22" height="26.4" fill="url(#gb)" stroke="#1a1a1a" stroke-width="1.2"/><path d="M913.5 48.60H931.6M913.5 52.65H931.6M913.5 56.70H931.6M913.5 60.75H931.6M913.5 64.80H931.6M913.5 68.85H931.6" stroke="#2a2a2a" stroke-width="1.3"/><circle cx="938.6" cy="52.7" r="3.6" fill="#f6f6f6" stroke="#111" stroke-width="1"/><path d="M932.5 60.3C935 58.3 940 57.8 940.6 60.5L938.6 69.5C938.2 71.5 940 71.6 942 70.2L942.4 72C939.5 75 934 75.2 934.6 71.2L936.4 63C936.8 61.2 935 61.2 933 62Z" fill="#f4f4f4" stroke="#111" stroke-width="1"/><rect x="969" y="35" width="14.8" height="11.6" fill="url(#gb)" stroke="#333" stroke-width="0.6"/><path d="M976.4 33.5V37.5M976.4 39.5v2" stroke="#111" stroke-width="1"/><path d="M976 44.3C978 41.8 981.5 41.8 983.4 44.3C981.5 46.6 978 46.6 976 44.3Z" fill="#fff" stroke="#333" stroke-width="0.7"/><circle cx="979.7" cy="44.2" r="1.3" fill="#111"/><path d="M968.8 62.6L984 58.3" stroke="#151515" stroke-width="2.6"/><path d="M973.8 62V70.5M979.3 60.5V69" stroke="#f4f4f4" stroke-width="1.7"/><path d="M968.8 72.6L978 71L984 65.5V72.6Z" fill="#58b848"/><rect x="968.6" y="82" width="15.6" height="14.6" fill="#5cb848"/><path d="M973.5 82L970.8 96.6H982L979.3 82Z" fill="#8a8a8a"/><path d="M976.4 83V96" stroke="#fff" stroke-width="1.5" stroke-dasharray="2 1.6"/><path d="M970.3 82.5V95M982.5 82.5V95" stroke="#d8f0a0" stroke-width="1" /><rect x="968.8" y="106" width="15.2" height="15" fill="#5f95de"/><path d="M968.8 121V117L972.5 112.5L975 115.5L978.5 110.5L984 117.5V121Z" fill="#58b848"/><path d="M1074.5 44V48.4" stroke="#6b3a1a" stroke-width="1.3"/><circle cx="1074.5" cy="39.3" r="5.8" fill="#78cc78" stroke="#2a5a2a" stroke-width="0.7"/><path d="M1079.20 64.70L1082.20 64.70" stroke="#15171c" stroke-width="1.3"/><path d="M1078.53 67.20L1081.13 68.70" stroke="#15171c" stroke-width="1.3"/><path d="M1076.70 69.03L1078.20 71.63" stroke="#15171c" stroke-width="1.3"/><path d="M1074.20 69.70L1074.20 72.70" stroke="#15171c" stroke-width="1.3"/><path d="M1071.70 69.03L1070.20 71.63" stroke="#15171c" stroke-width="1.3"/><path d="M1069.87 67.20L1067.27 68.70" stroke="#15171c" stroke-width="1.3"/><path d="M1069.20 64.70L1066.20 64.70" stroke="#15171c" stroke-width="1.3"/><path d="M1069.87 62.20L1067.27 60.70" stroke="#15171c" stroke-width="1.3"/><path d="M1071.70 60.37L1070.20 57.77" stroke="#15171c" stroke-width="1.3"/><path d="M1074.20 59.70L1074.20 56.70" stroke="#15171c" stroke-width="1.3"/><path d="M1076.70 60.37L1078.20 57.77" stroke="#15171c" stroke-width="1.3"/><path d="M1078.53 62.20L1081.13 60.70" stroke="#15171c" stroke-width="1.3"/><circle cx="1074.2" cy="64.7" r="3.7" fill="#f8c060"/><path d="M1075.6 85.5V82.5H1067.4V95.5H1075.6V92.5" fill="none" stroke="#f0f0f0" stroke-width="1.4"/><path d="M1071 87.6H1076V85L1081 89L1076 93V90.4H1071Z" fill="#f0f0f0"/><path d="M1072.2 105.8H1076.2V111.2H1079.6L1074.2 116.6L1068.8 111.2H1072.2Z" fill="#f0f0f0"/><path d="M1066.8 119H1081.2" stroke="#f0f0f0" stroke-width="1.6"/><rect x="1207.4" y="44.8" width="31" height="30.6" fill="url(#gb)" stroke="#111" stroke-width="1.3"/><rect x="1255.6" y="44.8" width="31" height="30.6" fill="url(#gb)" stroke="#111" stroke-width="2.0"/><rect x="1297.8" y="44.8" width="31" height="30.6" fill="url(#gb)" stroke="#111" stroke-width="1.3"/><rect x="1339.6" y="44.8" width="31" height="30.6" fill="url(#gb)" stroke="#111" stroke-width="1.3"/><rect x="1378.4" y="44.8" width="31" height="30.6" fill="url(#gb)" stroke="#111" stroke-width="1.3"/><rect x="1424.4" y="44.8" width="31" height="30.6" fill="url(#gb)" stroke="#111" stroke-width="1.3"/><path d="M1213 57L1223 52L1233 57L1223 62Z" fill="none" stroke="#222" stroke-width="1.2"/><path d="M1217 59.5V64.5C1220 67.5 1226 67.5 1229 64.5V59.5" fill="none" stroke="#222" stroke-width="1.2"/><path d="M1232 58V66" stroke="#222" stroke-width="1.1"/><circle cx="1232" cy="67" r="1.1" fill="#222"/><path d="M1271.2 56C1268.2 54 1265.7 54 1263.7 55V66C1265.7 65 1268.2 65 1271.2 67C1274.2 65 1276.7 65 1278.7 66V55C1276.7 54 1274.2 54 1271.2 56V67" fill="none" stroke="#222" stroke-width="1.2"/><path d="M1310.9 65C1310.9 62 1308.4 61 1308.4 57.5A5 5 0 0 1 1318.4 57.5C1318.4 61 1315.9 62 1315.9 65Z" fill="none" stroke="#222" stroke-width="1.2"/><path d="M1310.9 66.8H1315.9M1311.4 68.8H1315.4" stroke="#222" stroke-width="1.1"/><path d="M1307.34 54.00L1305.95 53.20" stroke="#222" stroke-width="1.1"/><path d="M1309.90 51.44L1309.10 50.05" stroke="#222" stroke-width="1.1"/><path d="M1313.40 50.50L1313.40 48.90" stroke="#222" stroke-width="1.1"/><path d="M1316.90 51.44L1317.70 50.05" stroke="#222" stroke-width="1.1"/><path d="M1319.46 54.00L1320.85 53.20" stroke="#222" stroke-width="1.1"/><path d="M1394 50.5L1403 56V65L1394 70L1385 65V56Z" fill="#1a1a1a"/><circle cx="1394" cy="59.5" r="4.6" fill="#e4e4e4"/><path d="M1394 50.5V54M1385 65L1389.5 62.5M1403 65L1398.5 62.5" stroke="#e4e4e4" stroke-width="1.2"/><path d="M1390 66L1394 64L1398 66L1394 68Z" fill="#e4e4e4"/><path d="M1431.5 52H1448.5V64.5H1436L1431.5 68.5Z" fill="none" stroke="#222" stroke-width="1.3"/><circle cx="1436" cy="58" r="1.1" fill="#222"/><circle cx="1440" cy="58" r="1.1" fill="#222"/><circle cx="1444" cy="58" r="1.1" fill="#222"/><rect x="1476.6" y="44.8" width="31" height="30.6" fill="url(#gr2)" stroke="#111" stroke-width="1.3"/><path d="M1485 53L1499 67M1499 53L1485 67" stroke="#fff" stroke-width="2.6"/></svg>
<span class="t" style="left:1349.08px;top:45.00px;font-size:22px;line-height:29px;color:#222;">?</span>
<div class="a" style="left:0.00px;top:176.50px;width:409.00px;height:795.00px;background:#3d4353;"></div>
<div class="a" style="left:0.00px;top:968.60px;width:405.00px;height:2.40px;background:#333a48;border-radius:0 0 4px 0"></div>
<svg class="a" style="left:0.00px;top:178.00px;" width="406" height="21" viewBox="0 0 406 21"><path d="M0 0H399L404.6 5.5V20.6H0Z" fill="#2e3440"/></svg>
<div class="a" style="left:5.20px;top:182.60px;width:1.00px;height:1.00px;background:#9aa0ac;"></div>
<div class="a" style="left:7.40px;top:182.60px;width:1.00px;height:1.00px;background:#9aa0ac;"></div>
<div class="a" style="left:5.20px;top:184.80px;width:1.00px;height:1.00px;background:#9aa0ac;"></div>
<div class="a" style="left:7.40px;top:184.80px;width:1.00px;height:1.00px;background:#9aa0ac;"></div>
<div class="a" style="left:5.20px;top:187.00px;width:1.00px;height:1.00px;background:#9aa0ac;"></div>
<div class="a" style="left:7.40px;top:187.00px;width:1.00px;height:1.00px;background:#9aa0ac;"></div>
<div class="a" style="left:5.20px;top:189.20px;width:1.00px;height:1.00px;background:#9aa0ac;"></div>
<div class="a" style="left:7.40px;top:189.20px;width:1.00px;height:1.00px;background:#9aa0ac;"></div>
<div class="a" style="left:5.20px;top:191.40px;width:1.00px;height:1.00px;background:#9aa0ac;"></div>
<div class="a" style="left:7.40px;top:191.40px;width:1.00px;height:1.00px;background:#9aa0ac;"></div>
<span class="t" style="left:15.30px;top:179.00px;font-size:12px;line-height:16px;color:#e8e8e4;transform:scaleX(0.8157);transform-origin:0 50%;">PROPERTIES</span>
<div class="a" style="left:17.70px;top:210.10px;width:303.40px;height:23.10px;background:#4b5872;border:1px solid #363e50;box-sizing:border-box;"></div>
<span class="t" style="left:21.40px;top:214.00px;font-size:12px;line-height:16px;color:#f0f0ec;letter-spacing:-0.053px;">No selection</span>
<svg class="a" style="left:309.50px;top:220.30px;" width="8" height="4.5" viewBox="0 0 8 4.5"><path d="M0 0H8L4 4.5Z" fill="#dcdcdc"/></svg>
<svg class="a" style="left:0.00px;top:0.00px;" width="409" height="240" viewBox="0 0 409 240"><rect x="330" y="218" width="9" height="9" fill="#58a8e8"/><rect x="334" y="222.5" width="9" height="9" fill="#3c8cd8" stroke="#3d4353" stroke-width="0.8"/><path d="M342.5 214.5V221.5M339 218H346" stroke="#7fe07f" stroke-width="1.8"/><rect x="354.3" y="214.8" width="12.5" height="10.5" fill="#6cc46c" stroke="#d8f8d8" stroke-width="1" stroke-dasharray="2 1.2"/><path d="M362.5 221L369.5 228.5L366.6 228.6L368.2 232L366.6 232.7L365 229.3L362.8 231.3Z" fill="#fff" stroke="#222" stroke-width="0.6"/><path d="M378 219.5L384.5 226.8L381.6 226.9L383.2 230.3L381.6 231L380 227.6L378 229.5Z" fill="#fff" stroke="#222" stroke-width="0.5"/><rect x="385" y="223" width="9" height="8.6" fill="#f2f2f2"/><path d="M386.5 225.3H392.5M386.5 227.4H392.5M386.5 229.5H392.5" stroke="#4a90d8" stroke-width="1"/><path d="M385.5 214L383 218.5H385.5L384.5 221.5L388 217.2H385.6L387.3 214Z" fill="#f8c040"/></svg>
<div class="a" style="left:17.00px;top:237.30px;width:376.50px;height:19.00px;background:#2e3440;"></div>
<span class="t" style="left:23.80px;top:239.00px;font-size:12px;line-height:16px;color:#f4f4f0;letter-spacing:-0.167px;font-weight:bold;">General</span>
<svg class="a" style="left:377.50px;top:244.60px;" width="8.5" height="4.8" viewBox="0 0 8.5 4.8"><path d="M0 0H8.5L4.25 4.8Z" fill="#e0e0e0"/></svg>
<div class="a" style="left:34.20px;top:257.00px;width:359.30px;height:134.21px;border:1px solid #2b313d;box-sizing:border-box;"></div>
<div class="a" style="left:200.20px;top:257.00px;width:1.00px;height:134.21px;background:#2b313d;"></div>
<span class="t" style="left:40.80px;top:259.00px;font-size:12px;line-height:16px;color:#e4e4e0;letter-spacing:-0.138px;">Color</span>
<div class="a" style="left:204.00px;top:260.80px;width:13.60px;height:12.60px;background:#000;border:1px solid #e8e8e8;box-sizing:border-box;"></div>
<span class="t" style="left:224.30px;top:259.00px;font-size:12px;line-height:16px;color:#f0f0ec;letter-spacing:-0.431px;">ByLayer</span>
<div class="a" style="left:34.20px;top:276.13px;width:359.30px;height:1.00px;background:#2b313d;"></div>
<span class="t" style="left:40.80px;top:278.00px;font-size:12px;line-height:16px;color:#e4e4e0;transform:scaleX(0.9062);transform-origin:0 50%;">Layer</span>
<span class="t" style="left:203.80px;top:278.00px;font-size:12px;line-height:16px;color:#f0f0ec;">0</span>
<div class="a" style="left:34.20px;top:295.16px;width:359.30px;height:1.00px;background:#2b313d;"></div>
<span class="t" style="left:40.80px;top:297.00px;font-size:12px;line-height:16px;color:#e4e4e0;letter-spacing:-0.045px;">Linetype</span>
<div class="a" style="left:204.00px;top:305.26px;width:66.00px;height:1.00px;background:#e8e8e8;"></div>
<span class="t" style="left:274.20px;top:297.00px;font-size:12px;line-height:16px;color:#f0f0ec;letter-spacing:-0.431px;">ByLayer</span>
<div class="a" style="left:34.20px;top:314.19px;width:359.30px;height:1.00px;background:#2b313d;"></div>
<span class="t" style="left:40.80px;top:316.00px;font-size:12px;line-height:16px;color:#e4e4e0;letter-spacing:-0.193px;">Linetype scale</span>
<span class="t" style="left:203.80px;top:316.00px;font-size:12px;line-height:16px;color:#f0f0ec;transform:scaleX(0.8995);transform-origin:0 50%;">1.0000</span>
<div class="a" style="left:34.20px;top:333.22px;width:359.30px;height:1.00px;background:#2b313d;"></div>
<span class="t" style="left:40.80px;top:335.00px;font-size:12px;line-height:16px;color:#e4e4e0;letter-spacing:0.062px;">Lineweight</span>
<div class="a" style="left:204.00px;top:343.32px;width:66.00px;height:1.00px;background:#e8e8e8;"></div>
<span class="t" style="left:274.20px;top:335.00px;font-size:12px;line-height:16px;color:#f0f0ec;letter-spacing:-0.431px;">ByLayer</span>
<div class="a" style="left:34.20px;top:352.25px;width:359.30px;height:1.00px;background:#2b313d;"></div>
<span class="t" style="left:40.80px;top:354.00px;font-size:12px;line-height:16px;color:#e4e4e0;letter-spacing:-0.285px;">Transparency</span>
<span class="t" style="left:203.80px;top:354.00px;font-size:12px;line-height:16px;color:#f0f0ec;letter-spacing:-0.431px;">ByLayer</span>
<div class="a" style="left:34.20px;top:371.28px;width:359.30px;height:1.00px;background:#2b313d;"></div>
<span class="t" style="left:40.80px;top:374.00px;font-size:12px;line-height:16px;color:#e4e4e0;letter-spacing:-0.391px;">Thickness</span>
<span class="t" style="left:203.80px;top:374.00px;font-size:12px;line-height:16px;color:#f0f0ec;transform:scaleX(0.8995);transform-origin:0 50%;">0.0000</span>
<div class="a" style="left:17.00px;top:393.20px;width:376.50px;height:19.00px;background:#2e3440;"></div>
<span class="t" style="left:23.80px;top:395.00px;font-size:12px;line-height:16px;color:#f4f4f0;letter-spacing:-0.235px;font-weight:bold;">3D Visualization</span>
<svg class="a" style="left:377.50px;top:400.50px;" width="8.5" height="4.8" viewBox="0 0 8.5 4.8"><path d="M0 0H8.5L4.25 4.8Z" fill="#e0e0e0"/></svg>
<div class="a" style="left:34.20px;top:412.60px;width:359.30px;height:20.03px;border:1px solid #2b313d;box-sizing:border-box;"></div>
<div class="a" style="left:200.20px;top:412.60px;width:1.00px;height:20.03px;background:#2b313d;"></div>
<span class="t" style="left:40.80px;top:415.00px;font-size:12px;line-height:16px;color:#e4e4e0;letter-spacing:-0.023px;">Material</span>
<span class="t" style="left:203.80px;top:415.00px;font-size:12px;line-height:16px;color:#f0f0ec;letter-spacing:-0.431px;">ByLayer</span>
<div class="a" style="left:17.00px;top:435.10px;width:376.50px;height:19.00px;background:#2e3440;"></div>
<span class="t" style="left:23.80px;top:437.00px;font-size:12px;line-height:16px;color:#f4f4f0;letter-spacing:-0.333px;font-weight:bold;">Plot style</span>
<svg class="a" style="left:377.50px;top:442.40px;" width="8.5" height="4.8" viewBox="0 0 8.5 4.8"><path d="M0 0H8.5L4.25 4.8Z" fill="#e0e0e0"/></svg>
<div class="a" style="left:34.20px;top:454.70px;width:359.30px;height:77.12px;border:1px solid #2b313d;box-sizing:border-box;"></div>
<div class="a" style="left:200.20px;top:454.70px;width:1.00px;height:77.12px;background:#2b313d;"></div>
<span class="t" style="left:40.80px;top:457.00px;font-size:12px;line-height:16px;color:#e4e4e0;letter-spacing:-0.067px;">Plot style</span>
<span class="t" style="left:203.80px;top:457.00px;font-size:12px;line-height:16px;color:#8e96a6;letter-spacing:-0.241px;">ByColor</span>
<div class="a" style="left:34.20px;top:473.83px;width:359.30px;height:1.00px;background:#2b313d;"></div>
<span class="t" style="left:40.80px;top:476.00px;font-size:12px;line-height:16px;color:#e4e4e0;letter-spacing:-0.063px;">Plot style table</span>
<span class="t" style="left:203.80px;top:476.00px;font-size:12px;line-height:16px;color:#f0f0ec;letter-spacing:0.078px;">None</span>
<div class="a" style="left:34.20px;top:492.86px;width:359.30px;height:1.00px;background:#2b313d;"></div>
<span class="t" style="left:40.80px;top:495.00px;font-size:12px;line-height:16px;color:#e4e4e0;letter-spacing:0.014px;">Plot table attached to</span>
<span class="t" style="left:203.80px;top:495.00px;font-size:12px;line-height:16px;color:#8e96a6;letter-spacing:0.062px;">Model</span>
<div class="a" style="left:34.20px;top:511.89px;width:359.30px;height:1.00px;background:#2b313d;"></div>
<span class="t" style="left:40.80px;top:514.00px;font-size:12px;line-height:16px;color:#e4e4e0;letter-spacing:-0.001px;">Plot table type</span>
<span class="t" style="left:203.80px;top:514.00px;font-size:12px;line-height:16px;color:#8e96a6;letter-spacing:-0.029px;">Not available</span>
<div class="a" style="left:17.00px;top:534.20px;width:376.50px;height:19.00px;background:#2e3440;"></div>
<span class="t" style="left:23.80px;top:536.00px;font-size:12px;line-height:16px;color:#f4f4f0;letter-spacing:-0.027px;font-weight:bold;">View</span>
<svg class="a" style="left:377.50px;top:541.50px;" width="8.5" height="4.8" viewBox="0 0 8.5 4.8"><path d="M0 0H8.5L4.25 4.8Z" fill="#e0e0e0"/></svg>
<div class="a" style="left:34.20px;top:553.70px;width:359.30px;height:96.15px;border:1px solid #2b313d;box-sizing:border-box;"></div>
<div class="a" style="left:200.20px;top:553.70px;width:1.00px;height:96.15px;background:#2b313d;"></div>
<span class="t" style="left:40.80px;top:556.00px;font-size:12px;line-height:16px;color:#e4e4e0;letter-spacing:-0.418px;">Center X</span>
<span class="t" style="left:203.80px;top:556.00px;font-size:12px;line-height:16px;color:#8e96a6;transform:scaleX(0.8906);transform-origin:0 50%;">1067.9535</span>
<div class="a" style="left:34.20px;top:572.83px;width:359.30px;height:1.00px;background:#2b313d;"></div>
<span class="t" style="left:40.80px;top:575.00px;font-size:12px;line-height:16px;color:#e4e4e0;letter-spacing:-0.453px;">Center Y</span>
<span class="t" style="left:203.80px;top:575.00px;font-size:12px;line-height:16px;color:#8e96a6;transform:scaleX(0.8894);transform-origin:0 50%;">994.5621</span>
<div class="a" style="left:34.20px;top:591.86px;width:359.30px;height:1.00px;background:#2b313d;"></div>
<span class="t" style="left:40.80px;top:594.00px;font-size:12px;line-height:16px;color:#e4e4e0;letter-spacing:-0.396px;">Center Z</span>
<span class="t" style="left:203.80px;top:594.00px;font-size:12px;line-height:16px;color:#8e96a6;transform:scaleX(0.8995);transform-origin:0 50%;">0.0000</span>
<div class="a" style="left:34.20px;top:610.89px;width:359.30px;height:1.00px;background:#2b313d;"></div>
<span class="t" style="left:40.80px;top:613.00px;font-size:12px;line-height:16px;color:#e4e4e0;letter-spacing:0.219px;">Height</span>
<span class="t" style="left:203.80px;top:613.00px;font-size:12px;line-height:16px;color:#8e96a6;transform:scaleX(0.8994);transform-origin:0 50%;">182.7568</span>
<div class="a" style="left:34.20px;top:629.92px;width:359.30px;height:1.00px;background:#2b313d;"></div>
<span class="t" style="left:40.80px;top:632.00px;font-size:12px;line-height:16px;color:#e4e4e0;letter-spacing:0.166px;">Width</span>
<span class="t" style="left:203.80px;top:632.00px;font-size:12px;line-height:16px;color:#8e96a6;transform:scaleX(0.8994);transform-origin:0 50%;">346.6869</span>
<div class="a" style="left:17.00px;top:652.40px;width:376.50px;height:19.00px;background:#2e3440;"></div>
<span class="t" style="left:23.80px;top:654.00px;font-size:12px;line-height:16px;color:#f4f4f0;letter-spacing:-0.293px;font-weight:bold;">Misc</span>
<svg class="a" style="left:377.50px;top:659.70px;" width="8.5" height="4.8" viewBox="0 0 8.5 4.8"><path d="M0 0H8.5L4.25 4.8Z" fill="#e0e0e0"/></svg>
<div class="a" style="left:34.20px;top:671.40px;width:359.30px;height:115.18px;border:1px solid #2b313d;box-sizing:border-box;"></div>
<div class="a" style="left:200.20px;top:671.40px;width:1.00px;height:115.18px;background:#2b313d;"></div>
<span class="t" style="left:40.80px;top:674.00px;font-size:12px;line-height:16px;color:#e4e4e0;letter-spacing:0.019px;">Annotation scale</span>
<span class="t" style="left:203.80px;top:674.00px;font-size:12px;line-height:16px;color:#f0f0ec;letter-spacing:-0.391px;">1:1</span>
<div class="a" style="left:34.20px;top:690.53px;width:359.30px;height:1.00px;background:#2b313d;"></div>
<span class="t" style="left:40.80px;top:693.00px;font-size:12px;line-height:16px;color:#e4e4e0;letter-spacing:-0.411px;">UCS icon On</span>
<span class="t" style="left:203.80px;top:693.00px;font-size:12px;line-height:16px;color:#f0f0ec;letter-spacing:-0.526px;">Yes</span>
<div class="a" style="left:34.20px;top:709.56px;width:359.30px;height:1.00px;background:#2b313d;"></div>
<span class="t" style="left:40.80px;top:712.00px;font-size:12px;line-height:16px;color:#e4e4e0;letter-spacing:-0.178px;">UCS icon at origin</span>
<span class="t" style="left:203.80px;top:712.00px;font-size:12px;line-height:16px;color:#f0f0ec;letter-spacing:-0.526px;">Yes</span>
<div class="a" style="left:34.20px;top:728.59px;width:359.30px;height:1.00px;background:#2b313d;"></div>
<span class="t" style="left:40.80px;top:731.00px;font-size:12px;line-height:16px;color:#e4e4e0;letter-spacing:-0.252px;">UCS per viewport</span>
<span class="t" style="left:203.80px;top:731.00px;font-size:12px;line-height:16px;color:#f0f0ec;letter-spacing:-0.526px;">Yes</span>
<div class="a" style="left:34.20px;top:747.62px;width:359.30px;height:1.00px;background:#2b313d;"></div>
<span class="t" style="left:40.80px;top:750.00px;font-size:12px;line-height:16px;color:#e4e4e0;transform:scaleX(0.9063);transform-origin:0 50%;">UCS Name</span>
<div class="a" style="left:34.20px;top:766.65px;width:359.30px;height:1.00px;background:#2b313d;"></div>
<span class="t" style="left:40.80px;top:769.00px;font-size:12px;line-height:16px;color:#e4e4e0;letter-spacing:-0.289px;">Visual Style</span>
<span class="t" style="left:203.80px;top:769.00px;font-size:12px;line-height:16px;color:#f0f0ec;letter-spacing:-0.168px;">2D Wireframe</span>
<span class="t" style="left:412.00px;top:182.00px;font-size:12px;line-height:16px;color:#111;letter-spacing:0.189px;">[−][Top][2D Wireframe]</span>
<svg class="a" style="left:0.00px;top:0.00px;" width="1916" height="971" viewBox="0 0 1916 971"><rect x="1858.4" y="191.5" width="11" height="4" fill="#ededed" stroke="#4c4c4c" stroke-width="1"/><rect x="1880.8" y="185.6" width="8.2" height="8.2" fill="#f0f0f0" stroke="#4c4c4c" stroke-width="1"/><rect x="1878.4" y="188.2" width="8.2" height="8.2" fill="#f0f0f0" stroke="#4c4c4c" stroke-width="1"/><rect x="1881" y="190.8" width="3" height="3" fill="#777"/><path d="M1899.5 187L1907.5 195M1907.5 187L1899.5 195" stroke="#4c4c4c" stroke-width="4.6"/><path d="M1899.5 187L1907.5 195M1907.5 187L1899.5 195" stroke="#f6f6f6" stroke-width="2.6"/><circle cx="1837" cy="282" r="54" fill="none" stroke="#f2f2f2" stroke-width="11" opacity="0.3"/><rect x="1811.5" y="256.7" width="51" height="50.6" fill="#e3e3e3" stroke="#6e6e6e" stroke-width="1.1"/><rect x="1821" y="266.5" width="32" height="31" fill="#d9d9d9"/><rect x="1814.4" y="370.1" width="44.8" height="14.3" fill="#e9e9ee" opacity="0.9"/><path d="M1848 374.5H1855L1851.5 380Z" fill="none" stroke="#a8a8a8" stroke-width="1"/><rect x="1882.6" y="410.8" width="40" height="214" rx="5" fill="#e4e4e4" fill-opacity="0.82" stroke="#b9b9b9" stroke-width="1.6"/><circle cx="1899.5" cy="441" r="9.5" fill="none" stroke="#cbcbcb" stroke-width="1.3"/><circle cx="1899.5" cy="441" r="4.6" fill="none" stroke="#cbcbcb" stroke-width="1.3"/><circle cx="1910" cy="417" r="2.6" fill="none" stroke="#cbcbcb" stroke-width="1"/><path d="M1886 467H1916M1886 576H1916" stroke="#cbcbcb" stroke-width="1"/><path d="M1891 488C1893 476 1896 474 1897 484L1899 474L1901.5 484L1904 475L1905 486L1909 479C1909 489 1906 495 1903 497H1895Z" fill="none" stroke="#cbcbcb" stroke-width="1.3"/><path d="M1889 501L1903 515M1903 501L1889 515" stroke="#cbcbcb" stroke-width="1.2"/><circle cx="1904.5" cy="515" r="4" fill="none" stroke="#cbcbcb" stroke-width="1.3"/><path d="M1907.5 518L1911 522" stroke="#cbcbcb" stroke-width="2"/><path d="M1899 541L1895 547H1897.5V560H1900.5V547H1903Z" fill="none" stroke="#cbcbcb" stroke-width="1.1"/><ellipse cx="1899" cy="553" rx="8.5" ry="3.5" fill="none" stroke="#cbcbcb" stroke-width="1.1"/><rect x="1888.5" y="581" width="5.5" height="5" fill="none" stroke="#cbcbcb"/><rect x="1896.5" y="581" width="5.5" height="5" fill="none" stroke="#cbcbcb"/><rect x="1904.5" y="581" width="5.5" height="5" fill="none" stroke="#cbcbcb"/><rect x="1888.5" y="590.5" width="16" height="12.5" fill="none" stroke="#cbcbcb"/><path d="M1893 593L1901 597L1893 601Z" fill="#cbcbcb"/><circle cx="1910" cy="618" r="2.6" fill="none" stroke="#cbcbcb" stroke-width="1"/><path d="M1899 462.5h4l-2 2.6z" fill="#cbcbcb"/><path d="M1899 537.5h4l-2 2.6z" fill="#cbcbcb"/><path d="M1899 570.5h4l-2 2.6z" fill="#cbcbcb"/><path d="M1882 535.6H1916" stroke="#2a2a2a" stroke-width="1.2"/><rect x="466" y="947" width="1207.4" height="30" fill="#fff" fill-opacity="0.72"/><path d="M466 947H1673.4V972" fill="none" stroke="#3a3a3a" stroke-width="1.1"/><rect x="410.5" y="948.8" width="56" height="24" fill="#3e4554"/><rect x="414" y="952" width="1.2" height="1.5" fill="#d8d8d8"/><rect x="416.6" y="952" width="1.2" height="1.5" fill="#d8d8d8"/><rect x="414" y="955" width="1.2" height="1.5" fill="#d8d8d8"/><rect x="416.6" y="955" width="1.2" height="1.5" fill="#d8d8d8"/><rect x="414" y="958" width="1.2" height="1.5" fill="#d8d8d8"/><rect x="416.6" y="958" width="1.2" height="1.5" fill="#d8d8d8"/><rect x="414" y="961" width="1.2" height="1.5" fill="#d8d8d8"/><rect x="416.6" y="961" width="1.2" height="1.5" fill="#d8d8d8"/><rect x="414" y="964" width="1.2" height="1.5" fill="#d8d8d8"/><rect x="416.6" y="964" width="1.2" height="1.5" fill="#d8d8d8"/><rect x="414" y="967" width="1.2" height="1.5" fill="#d8d8d8"/><rect x="416.6" y="967" width="1.2" height="1.5" fill="#d8d8d8"/><path d="M426 957.5L434 965.5M434 957.5L426 965.5" stroke="#e0e0e0" stroke-width="1.7"/><path d="M450 965.5L459 957.5" stroke="#e0e0e0" stroke-width="2.4"/><circle cx="460.5" cy="956.5" r="3" fill="none" stroke="#e0e0e0" stroke-width="1.6"/><rect x="472.5" y="955.5" width="14" height="11" fill="#fff" stroke="#888" stroke-width="1"/><path d="M475 959L478 961L475 963M479 963.5H483" fill="none" stroke="#555" stroke-width="0.9"/><path d="M490.5 958.5h5l-2.5 3.4z" fill="#777"/><path d="M1661.5 961.5h8l-4 -4.4z" fill="#9a9a9a"/></svg>
<span class="t" style="left:1824.59px;top:274.00px;font-size:12.5px;line-height:16px;color:#8c8c8c;letter-spacing:-0.323px;font-weight:bold;">TOP</span>
<span class="t" style="left:1818.25px;top:369.00px;font-size:11.5px;line-height:15px;color:#9a9a9a;transform:scaleX(0.8386);transform-origin:0 50%;">WCS</span>
<span class="t" style="left:1829.41px;top:213.00px;font-size:21px;line-height:27px;color:#e4e4e4;font-weight:bold;-webkit-text-stroke:1.1px #c2c2c2;">N</span>
<span class="t" style="left:1830.00px;top:325.00px;font-size:21px;line-height:27px;color:#e4e4e4;font-weight:bold;-webkit-text-stroke:1.1px #c2c2c2;">S</span>
<span class="t" style="left:1771.09px;top:269.00px;font-size:21px;line-height:27px;color:#e4e4e4;font-weight:bold;-webkit-text-stroke:1.1px #c2c2c2;">W</span>
<span class="t" style="left:1887.00px;top:269.00px;font-size:21px;line-height:27px;color:#e4e4e4;font-weight:bold;-webkit-text-stroke:1.1px #c2c2c2;">E</span>
<span class="t" style="left:505.00px;top:952.00px;font-size:12px;line-height:16px;color:#9a9a9a;letter-spacing:0.265px;font-style:italic;">Type a command</span>
<div class="a" style="left:415.30px;top:211.30px;width:524.00px;height:747.00px;background:#2e3341;border-radius:5px 2px 3px 0;box-shadow:1px 1px 2px rgba(0,0,0,.5)"></div>
<div class="a" style="left:439.80px;top:217.00px;width:494.10px;height:736.60px;background:#ffffff;"></div>
<svg class="a" style="left:422.50px;top:217.50px;" width="9" height="9" viewBox="0 0 9 9"><path d="M1 1L8 8M8 1L1 8" stroke="#e4e4e4" stroke-width="1.7"/></svg>
<span class="t" style="left:426.9px;top:878.4px;font-size:12px;line-height:14px;color:#d4d4d4;transform:translate(-50%,-50%) rotate(-90deg) scaleX(0.8502)">ELECTRICAL DESIGN</span>
<svg class="a" style="left:417.80px;top:938.00px;" width="18" height="18.5" viewBox="0 0 18 18.5"><path d="M9 0.8L16.6 5.2V13.6L9 18L1.4 13.6V5.2Z" fill="#f0a020"/><circle cx="9" cy="8.6" r="4.3" fill="#2e3341"/><path d="M9 0.5V4.5M1.4 13.6L5.4 11.2M16.6 13.6L12.6 11.2" stroke="#2e3341" stroke-width="1.3"/><path d="M5.2 14.2L9 12L12.8 14.2L9 16.4Z" fill="#2e3341"/></svg>
<div class="a" style="left:440.00px;top:239.00px;width:493.00px;height:1.00px;background:#b8b8b8;"></div>
<div class="a" style="left:442.60px;top:219.60px;width:98.80px;height:20.00px;border:1px solid #b4b4b4;box-sizing:border-box;background:linear-gradient(#f4f4f4,#e4e4e4)"></div>
<span class="t" style="left:468.00px;top:222.00px;font-size:12px;line-height:16px;color:#111;letter-spacing:0.071px;">Stringing</span>
<div class="a" style="left:542.50px;top:219.60px;width:123.30px;height:20.00px;border:1px solid #b4b4b4;box-sizing:border-box;background:linear-gradient(#f4f4f4,#e4e4e4)"></div>
<span class="t" style="left:560.50px;top:222.00px;font-size:12px;line-height:16px;color:#111;letter-spacing:-0.234px;">Electrical devices</span>
<div class="a" style="left:767.50px;top:219.60px;width:99.50px;height:20.00px;border:1px solid #b4b4b4;box-sizing:border-box;background:linear-gradient(#f4f4f4,#e4e4e4)"></div>
<span class="t" style="left:797.30px;top:222.00px;font-size:12px;line-height:16px;color:#111;letter-spacing:-0.215px;">Cabling</span>
<div class="a" style="left:665.50px;top:217.00px;width:100.50px;height:23.20px;background:#fff;border:1px solid #b4b4b4;box-sizing:border-box;border-bottom:none"></div>
<span class="t" style="left:680.60px;top:221.00px;font-size:12px;line-height:16px;color:#111;letter-spacing:0.069px;">Color coding</span>
<div class="a" style="left:453.50px;top:267.80px;width:238.20px;height:292.90px;border:1px solid #d4dfe6;box-sizing:border-box;border-radius:3px"></div>
<div class="a" style="left:464.00px;top:262.00px;width:106.00px;height:12.00px;background:#fff;"></div>
<span class="t" style="left:470.80px;top:259.00px;font-size:12px;line-height:16px;color:#0a0a0a;letter-spacing:-0.171px;font-weight:bold;">Coloring presets</span>
<div class="a" style="left:458.20px;top:278.30px;width:99.50px;height:23.40px;background:#f2f2f2;border:1px solid #b8b8b8;box-sizing:border-box;"></div>
<span class="t" style="left:485.52px;top:283.00px;font-size:12px;line-height:16px;color:#a2a2a2;letter-spacing:0.141px;">Add row</span>
<div class="a" style="left:458.20px;top:315.20px;width:19.60px;height:19.60px;background:#dddddd;border:1px solid #adadad;box-sizing:border-box;"></div>
<span class="t" style="left:463.66px;top:316.00px;font-size:13px;line-height:17px;color:#0a0a0a;font-weight:bold;">X</span>
<span class="t" style="left:489.30px;top:317.00px;font-size:12px;line-height:16px;color:#111;letter-spacing:-0.400px;">1.</span>
<div class="a" style="left:501.10px;top:317.10px;width:15.80px;height:15.70px;background:#b4e0a0;border:1px solid #b9b9b9;box-sizing:border-box;"></div>
<div class="a" style="left:519.10px;top:317.10px;width:15.80px;height:15.70px;background:#5058c4;border:1px solid #b9b9b9;box-sizing:border-box;"></div>
<div class="a" style="left:537.10px;top:317.10px;width:15.80px;height:15.70px;background:#f03462;border:1px solid #b9b9b9;box-sizing:border-box;"></div>
<div class="a" style="left:555.10px;top:317.10px;width:15.80px;height:15.70px;background:#a4dcd2;border:1px solid #b9b9b9;box-sizing:border-box;"></div>
<div class="a" style="left:573.10px;top:317.10px;width:15.80px;height:15.70px;background:#3a7c42;border:1px solid #b9b9b9;box-sizing:border-box;"></div>
<div class="a" style="left:591.10px;top:317.10px;width:15.80px;height:15.70px;background:#72b240;border:1px solid #b9b9b9;box-sizing:border-box;"></div>
<div class="a" style="left:501.10px;top:335.10px;width:15.80px;height:15.70px;background:#8cc2da;border:1px solid #b9b9b9;box-sizing:border-box;"></div>
<div class="a" style="left:519.10px;top:335.10px;width:15.80px;height:15.70px;background:#9472e2;border:1px solid #b9b9b9;box-sizing:border-box;"></div>
<div class="a" style="left:537.10px;top:335.10px;width:15.80px;height:15.70px;background:#2a5aaa;border:1px solid #b9b9b9;box-sizing:border-box;"></div>
<div class="a" style="left:555.10px;top:335.10px;width:15.80px;height:15.70px;background:#a87230;border:1px solid #b9b9b9;box-sizing:border-box;"></div>
<div class="a" style="left:573.10px;top:335.10px;width:15.80px;height:15.70px;background:#5462d4;border:1px solid #b9b9b9;box-sizing:border-box;"></div>
<div class="a" style="left:591.10px;top:335.10px;width:15.80px;height:15.70px;background:#c494ea;border:1px solid #b9b9b9;box-sizing:border-box;"></div>
<div class="a" style="left:501.10px;top:353.10px;width:15.80px;height:15.70px;background:#e272c2;border:1px solid #b9b9b9;box-sizing:border-box;"></div>
<div class="a" style="left:519.10px;top:353.10px;width:15.80px;height:15.70px;background:#c2a272;border:1px solid #b9b9b9;box-sizing:border-box;"></div>
<div class="a" style="left:537.10px;top:353.10px;width:15.80px;height:15.70px;background:#9adaa2;border:1px solid #b9b9b9;box-sizing:border-box;"></div>
<div class="a" style="left:618.00px;top:317.00px;width:16.00px;height:16.00px;background:#429272;border:1px solid #707070;box-sizing:border-box;"></div>
<div class="a" style="left:644.20px;top:315.20px;width:19.60px;height:19.60px;background:#dddddd;border:1px solid #adadad;box-sizing:border-box;"></div>
<svg class="a" style="left:644.20px;top:315.20px;" width="20" height="20" viewBox="0 0 20 20"><path d="M10 4V16M4 10H16" stroke="#3c3c3c" stroke-width="1.5"/></svg>
<div class="a" style="left:666.20px;top:315.20px;width:19.70px;height:19.60px;background:#dddddd;border:1px solid #adadad;box-sizing:border-box;"></div>
<svg class="a" style="left:666.20px;top:315.20px;" width="20" height="20" viewBox="0 0 20 20"><path d="M5.98 6.79A5.0 5.0 0 0 1 8.95 4.99" fill="none" stroke="#f02020" stroke-width="2.6"/><path d="M8.56 5.08A5.0 5.0 0 0 1 12.01 5.37" fill="none" stroke="#f08030" stroke-width="2.6"/><path d="M11.65 5.21A5.0 5.0 0 0 1 14.27 7.48" fill="none" stroke="#f0d060" stroke-width="2.6"/><path d="M14.07 7.14A5.0 5.0 0 0 1 14.86 10.51" fill="none" stroke="#e8e8c0" stroke-width="2.6"/><path d="M14.90 10.11A5.0 5.0 0 0 1 13.56 13.31" fill="none" stroke="#60c060" stroke-width="2.6"/><path d="M13.82 13.01A5.0 5.0 0 0 1 10.85 14.81" fill="none" stroke="#40c0c0" stroke-width="2.6"/><path d="M11.24 14.72A5.0 5.0 0 0 1 7.79 14.43" fill="none" stroke="#3050f0" stroke-width="2.6"/><path d="M8.15 14.59A5.0 5.0 0 0 1 5.53 12.32" fill="none" stroke="#2020d0" stroke-width="2.6"/><path d="M5.73 12.66A5.0 5.0 0 0 1 4.94 9.29" fill="none" stroke="#9040c0" stroke-width="2.6"/><path d="M4.90 9.69A5.0 5.0 0 0 1 6.24 6.49" fill="none" stroke="#e04080" stroke-width="2.6"/></svg>
<div class="a" style="left:458.20px;top:377.20px;width:19.60px;height:19.60px;background:#dddddd;border:1px solid #adadad;box-sizing:border-box;"></div>
<span class="t" style="left:463.66px;top:378.00px;font-size:13px;line-height:17px;color:#0a0a0a;font-weight:bold;">X</span>
<span class="t" style="left:489.30px;top:379.00px;font-size:12px;line-height:16px;color:#111;letter-spacing:-0.400px;">2.</span>
<div class="a" style="left:501.10px;top:379.10px;width:15.80px;height:15.70px;background:#c2f0aa;border:1px solid #b9b9b9;box-sizing:border-box;"></div>
<div class="a" style="left:519.10px;top:379.10px;width:15.80px;height:15.70px;background:#82d282;border:1px solid #b9b9b9;box-sizing:border-box;"></div>
<div class="a" style="left:537.10px;top:379.10px;width:15.80px;height:15.70px;background:#82d282;border:1px solid #b9b9b9;box-sizing:border-box;"></div>
<div class="a" style="left:555.10px;top:379.10px;width:15.80px;height:15.70px;background:#42ba4a;border:1px solid #b9b9b9;box-sizing:border-box;"></div>
<div class="a" style="left:573.10px;top:379.10px;width:15.80px;height:15.70px;background:#129a22;border:1px solid #b9b9b9;box-sizing:border-box;"></div>
<div class="a" style="left:591.10px;top:379.10px;width:15.80px;height:15.70px;background:#325a2a;border:1px solid #b9b9b9;box-sizing:border-box;"></div>
<div class="a" style="left:618.00px;top:379.00px;width:16.00px;height:16.00px;background:#82da82;border:1px solid #208a30;box-sizing:border-box;"></div>
<div class="a" style="left:644.20px;top:377.20px;width:19.60px;height:19.60px;background:#dddddd;border:1px solid #adadad;box-sizing:border-box;"></div>
<svg class="a" style="left:644.20px;top:377.20px;" width="20" height="20" viewBox="0 0 20 20"><path d="M10 4V16M4 10H16" stroke="#3c3c3c" stroke-width="1.5"/></svg>
<div class="a" style="left:666.20px;top:377.20px;width:19.70px;height:19.60px;background:#dddddd;border:1px solid #adadad;box-sizing:border-box;"></div>
<svg class="a" style="left:666.20px;top:377.20px;" width="20" height="20" viewBox="0 0 20 20"><path d="M5.98 6.79A5.0 5.0 0 0 1 8.95 4.99" fill="none" stroke="#f02020" stroke-width="2.6"/><path d="M8.56 5.08A5.0 5.0 0 0 1 12.01 5.37" fill="none" stroke="#f08030" stroke-width="2.6"/><path d="M11.65 5.21A5.0 5.0 0 0 1 14.27 7.48" fill="none" stroke="#f0d060" stroke-width="2.6"/><path d="M14.07 7.14A5.0 5.0 0 0 1 14.86 10.51" fill="none" stroke="#e8e8c0" stroke-width="2.6"/><path d="M14.90 10.11A5.0 5.0 0 0 1 13.56 13.31" fill="none" stroke="#60c060" stroke-width="2.6"/><path d="M13.82 13.01A5.0 5.0 0 0 1 10.85 14.81" fill="none" stroke="#40c0c0" stroke-width="2.6"/><path d="M11.24 14.72A5.0 5.0 0 0 1 7.79 14.43" fill="none" stroke="#3050f0" stroke-width="2.6"/><path d="M8.15 14.59A5.0 5.0 0 0 1 5.53 12.32" fill="none" stroke="#2020d0" stroke-width="2.6"/><path d="M5.73 12.66A5.0 5.0 0 0 1 4.94 9.29" fill="none" stroke="#9040c0" stroke-width="2.6"/><path d="M4.90 9.69A5.0 5.0 0 0 1 6.24 6.49" fill="none" stroke="#e04080" stroke-width="2.6"/></svg>
<div class="a" style="left:458.20px;top:403.30px;width:19.60px;height:19.60px;background:#dddddd;border:1px solid #adadad;box-sizing:border-box;"></div>
<span class="t" style="left:463.66px;top:404.00px;font-size:13px;line-height:17px;color:#0a0a0a;font-weight:bold;">X</span>
<span class="t" style="left:489.30px;top:405.00px;font-size:12px;line-height:16px;color:#111;letter-spacing:-0.400px;">3.</span>
<div class="a" style="left:501.10px;top:405.20px;width:15.80px;height:15.70px;background:#baf2e2;border:1px solid #b9b9b9;box-sizing:border-box;"></div>
<div class="a" style="left:519.10px;top:405.20px;width:15.80px;height:15.70px;background:#a2daf8;border:1px solid #b9b9b9;box-sizing:border-box;"></div>
<div class="a" style="left:537.10px;top:405.20px;width:15.80px;height:15.70px;background:#2282f8;border:1px solid #b9b9b9;box-sizing:border-box;"></div>
<div class="a" style="left:555.10px;top:405.20px;width:15.80px;height:15.70px;background:#1424ca;border:1px solid #b9b9b9;box-sizing:border-box;"></div>
<div class="a" style="left:573.10px;top:405.20px;width:15.80px;height:15.70px;background:#521a72;border:1px solid #b9b9b9;box-sizing:border-box;"></div>
<div class="a" style="left:591.10px;top:405.20px;width:15.80px;height:15.70px;background:#121a72;border:1px solid #b9b9b9;box-sizing:border-box;"></div>
<div class="a" style="left:618.00px;top:405.10px;width:16.00px;height:16.00px;background:#1a1af8;border:1px solid #3030b0;box-sizing:border-box;"></div>
<div class="a" style="left:644.20px;top:403.30px;width:19.60px;height:19.60px;background:#dddddd;border:1px solid #adadad;box-sizing:border-box;"></div>
<svg class="a" style="left:644.20px;top:403.30px;" width="20" height="20" viewBox="0 0 20 20"><path d="M10 4V16M4 10H16" stroke="#3c3c3c" stroke-width="1.5"/></svg>
<div class="a" style="left:666.20px;top:403.30px;width:19.70px;height:19.60px;background:#dddddd;border:1px solid #adadad;box-sizing:border-box;"></div>
<svg class="a" style="left:666.20px;top:403.30px;" width="20" height="20" viewBox="0 0 20 20"><path d="M5.98 6.79A5.0 5.0 0 0 1 8.95 4.99" fill="none" stroke="#f02020" stroke-width="2.6"/><path d="M8.56 5.08A5.0 5.0 0 0 1 12.01 5.37" fill="none" stroke="#f08030" stroke-width="2.6"/><path d="M11.65 5.21A5.0 5.0 0 0 1 14.27 7.48" fill="none" stroke="#f0d060" stroke-width="2.6"/><path d="M14.07 7.14A5.0 5.0 0 0 1 14.86 10.51" fill="none" stroke="#e8e8c0" stroke-width="2.6"/><path d="M14.90 10.11A5.0 5.0 0 0 1 13.56 13.31" fill="none" stroke="#60c060" stroke-width="2.6"/><path d="M13.82 13.01A5.0 5.0 0 0 1 10.85 14.81" fill="none" stroke="#40c0c0" stroke-width="2.6"/><path d="M11.24 14.72A5.0 5.0 0 0 1 7.79 14.43" fill="none" stroke="#3050f0" stroke-width="2.6"/><path d="M8.15 14.59A5.0 5.0 0 0 1 5.53 12.32" fill="none" stroke="#2020d0" stroke-width="2.6"/><path d="M5.73 12.66A5.0 5.0 0 0 1 4.94 9.29" fill="none" stroke="#9040c0" stroke-width="2.6"/><path d="M4.90 9.69A5.0 5.0 0 0 1 6.24 6.49" fill="none" stroke="#e04080" stroke-width="2.6"/></svg>
<div class="a" style="left:458.20px;top:429.40px;width:19.60px;height:19.60px;background:#dddddd;border:1px solid #adadad;box-sizing:border-box;"></div>
<span class="t" style="left:463.66px;top:430.00px;font-size:13px;line-height:17px;color:#0a0a0a;font-weight:bold;">X</span>
<span class="t" style="left:489.30px;top:431.00px;font-size:12px;line-height:16px;color:#111;letter-spacing:-0.400px;">4.</span>
<div class="a" style="left:501.10px;top:431.30px;width:15.80px;height:15.70px;background:#82d282;border:1px solid #b9b9b9;box-sizing:border-box;"></div>
<div class="a" style="left:519.10px;top:431.30px;width:15.80px;height:15.70px;background:#2292da;border:1px solid #b9b9b9;box-sizing:border-box;"></div>
<div class="a" style="left:537.10px;top:431.30px;width:15.80px;height:15.70px;background:#1a2ab2;border:1px solid #b9b9b9;box-sizing:border-box;"></div>
<div class="a" style="left:555.10px;top:431.30px;width:15.80px;height:15.70px;background:#4a5a6a;border:1px solid #b9b9b9;box-sizing:border-box;"></div>
<div class="a" style="left:573.10px;top:431.30px;width:15.80px;height:15.70px;background:#f2aaba;border:1px solid #b9b9b9;box-sizing:border-box;"></div>
<div class="a" style="left:591.10px;top:431.30px;width:15.80px;height:15.70px;background:#723262;border:1px solid #b9b9b9;box-sizing:border-box;"></div>
<div class="a" style="left:618.00px;top:431.20px;width:16.00px;height:16.00px;background:#926ada;border:1px solid #604890;box-sizing:border-box;"></div>
<div class="a" style="left:644.20px;top:429.40px;width:19.60px;height:19.60px;background:#dddddd;border:1px solid #adadad;box-sizing:border-box;"></div>
<svg class="a" style="left:644.20px;top:429.40px;" width="20" height="20" viewBox="0 0 20 20"><path d="M10 4V16M4 10H16" stroke="#3c3c3c" stroke-width="1.5"/></svg>
<div class="a" style="left:666.20px;top:429.40px;width:19.70px;height:19.60px;background:#dddddd;border:1px solid #adadad;box-sizing:border-box;"></div>
<svg class="a" style="left:666.20px;top:429.40px;" width="20" height="20" viewBox="0 0 20 20"><path d="M5.98 6.79A5.0 5.0 0 0 1 8.95 4.99" fill="none" stroke="#f02020" stroke-width="2.6"/><path d="M8.56 5.08A5.0 5.0 0 0 1 12.01 5.37" fill="none" stroke="#f08030" stroke-width="2.6"/><path d="M11.65 5.21A5.0 5.0 0 0 1 14.27 7.48" fill="none" stroke="#f0d060" stroke-width="2.6"/><path d="M14.07 7.14A5.0 5.0 0 0 1 14.86 10.51" fill="none" stroke="#e8e8c0" stroke-width="2.6"/><path d="M14.90 10.11A5.0 5.0 0 0 1 13.56 13.31" fill="none" stroke="#60c060" stroke-width="2.6"/><path d="M13.82 13.01A5.0 5.0 0 0 1 10.85 14.81" fill="none" stroke="#40c0c0" stroke-width="2.6"/><path d="M11.24 14.72A5.0 5.0 0 0 1 7.79 14.43" fill="none" stroke="#3050f0" stroke-width="2.6"/><path d="M8.15 14.59A5.0 5.0 0 0 1 5.53 12.32" fill="none" stroke="#2020d0" stroke-width="2.6"/><path d="M5.73 12.66A5.0 5.0 0 0 1 4.94 9.29" fill="none" stroke="#9040c0" stroke-width="2.6"/><path d="M4.90 9.69A5.0 5.0 0 0 1 6.24 6.49" fill="none" stroke="#e04080" stroke-width="2.6"/></svg>
<div class="a" style="left:458.20px;top:455.50px;width:19.60px;height:19.60px;background:#dddddd;border:1px solid #adadad;box-sizing:border-box;"></div>
<span class="t" style="left:463.66px;top:457.00px;font-size:13px;line-height:17px;color:#0a0a0a;font-weight:bold;">X</span>
<span class="t" style="left:489.30px;top:457.00px;font-size:12px;line-height:16px;color:#111;letter-spacing:-0.400px;">5.</span>
<div class="a" style="left:501.10px;top:457.40px;width:15.80px;height:15.70px;background:#72ca62;border:1px solid #b9b9b9;box-sizing:border-box;"></div>
<div class="a" style="left:519.10px;top:457.40px;width:15.80px;height:15.70px;background:#6a52b2;border:1px solid #b9b9b9;box-sizing:border-box;"></div>
<div class="a" style="left:537.10px;top:457.40px;width:15.80px;height:15.70px;background:#b2f2ea;border:1px solid #b9b9b9;box-sizing:border-box;"></div>
<div class="a" style="left:555.10px;top:457.40px;width:15.80px;height:15.70px;background:#82d27a;border:1px solid #b9b9b9;box-sizing:border-box;"></div>
<div class="a" style="left:573.10px;top:457.40px;width:15.80px;height:15.70px;background:#6a9ae2;border:1px solid #b9b9b9;box-sizing:border-box;"></div>
<div class="a" style="left:591.10px;top:457.40px;width:15.80px;height:15.70px;background:#f8e2ba;border:1px solid #b9b9b9;box-sizing:border-box;"></div>
<div class="a" style="left:618.00px;top:457.30px;width:16.00px;height:16.00px;background:#cad272;border:1px solid #707030;box-sizing:border-box;"></div>
<div class="a" style="left:644.20px;top:455.50px;width:19.60px;height:19.60px;background:#dddddd;border:1px solid #adadad;box-sizing:border-box;"></div>
<svg class="a" style="left:644.20px;top:455.50px;" width="20" height="20" viewBox="0 0 20 20"><path d="M10 4V16M4 10H16" stroke="#3c3c3c" stroke-width="1.5"/></svg>
<div class="a" style="left:666.20px;top:455.50px;width:19.70px;height:19.60px;background:#dddddd;border:1px solid #adadad;box-sizing:border-box;"></div>
<svg class="a" style="left:666.20px;top:455.50px;" width="20" height="20" viewBox="0 0 20 20"><path d="M5.98 6.79A5.0 5.0 0 0 1 8.95 4.99" fill="none" stroke="#f02020" stroke-width="2.6"/><path d="M8.56 5.08A5.0 5.0 0 0 1 12.01 5.37" fill="none" stroke="#f08030" stroke-width="2.6"/><path d="M11.65 5.21A5.0 5.0 0 0 1 14.27 7.48" fill="none" stroke="#f0d060" stroke-width="2.6"/><path d="M14.07 7.14A5.0 5.0 0 0 1 14.86 10.51" fill="none" stroke="#e8e8c0" stroke-width="2.6"/><path d="M14.90 10.11A5.0 5.0 0 0 1 13.56 13.31" fill="none" stroke="#60c060" stroke-width="2.6"/><path d="M13.82 13.01A5.0 5.0 0 0 1 10.85 14.81" fill="none" stroke="#40c0c0" stroke-width="2.6"/><path d="M11.24 14.72A5.0 5.0 0 0 1 7.79 14.43" fill="none" stroke="#3050f0" stroke-width="2.6"/><path d="M8.15 14.59A5.0 5.0 0 0 1 5.53 12.32" fill="none" stroke="#2020d0" stroke-width="2.6"/><path d="M5.73 12.66A5.0 5.0 0 0 1 4.94 9.29" fill="none" stroke="#9040c0" stroke-width="2.6"/><path d="M4.90 9.69A5.0 5.0 0 0 1 6.24 6.49" fill="none" stroke="#e04080" stroke-width="2.6"/></svg>
<div class="a" style="left:458.20px;top:481.60px;width:19.60px;height:19.60px;background:#dddddd;border:1px solid #adadad;box-sizing:border-box;"></div>
<span class="t" style="left:463.66px;top:483.00px;font-size:13px;line-height:17px;color:#0a0a0a;font-weight:bold;">X</span>
<span class="t" style="left:489.30px;top:483.00px;font-size:12px;line-height:16px;color:#111;letter-spacing:-0.400px;">6.</span>
<div class="a" style="left:501.10px;top:483.50px;width:15.80px;height:15.70px;background:#323a72;border:1px solid #b9b9b9;box-sizing:border-box;"></div>
<div class="a" style="left:519.10px;top:483.50px;width:15.80px;height:15.70px;background:#ba3272;border:1px solid #b9b9b9;box-sizing:border-box;"></div>
<div class="a" style="left:537.10px;top:483.50px;width:15.80px;height:15.70px;background:#f21a4a;border:1px solid #b9b9b9;box-sizing:border-box;"></div>
<div class="a" style="left:555.10px;top:483.50px;width:15.80px;height:15.70px;background:#f2527a;border:1px solid #b9b9b9;box-sizing:border-box;"></div>
<div class="a" style="left:573.10px;top:483.50px;width:15.80px;height:15.70px;background:#bab252;border:1px solid #b9b9b9;box-sizing:border-box;"></div>
<div class="a" style="left:591.10px;top:483.50px;width:15.80px;height:15.70px;background:#7abaca;border:1px solid #b9b9b9;box-sizing:border-box;"></div>
<div class="a" style="left:618.00px;top:483.40px;width:16.00px;height:16.00px;background:#92326a;border:1px solid #604060;box-sizing:border-box;"></div>
<div class="a" style="left:644.20px;top:481.60px;width:19.60px;height:19.60px;background:#dddddd;border:1px solid #adadad;box-sizing:border-box;"></div>
<svg class="a" style="left:644.20px;top:481.60px;" width="20" height="20" viewBox="0 0 20 20"><path d="M10 4V16M4 10H16" stroke="#3c3c3c" stroke-width="1.5"/></svg>
<div class="a" style="left:666.20px;top:481.60px;width:19.70px;height:19.60px;background:#dddddd;border:1px solid #adadad;box-sizing:border-box;"></div>
<svg class="a" style="left:666.20px;top:481.60px;" width="20" height="20" viewBox="0 0 20 20"><path d="M5.98 6.79A5.0 5.0 0 0 1 8.95 4.99" fill="none" stroke="#f02020" stroke-width="2.6"/><path d="M8.56 5.08A5.0 5.0 0 0 1 12.01 5.37" fill="none" stroke="#f08030" stroke-width="2.6"/><path d="M11.65 5.21A5.0 5.0 0 0 1 14.27 7.48" fill="none" stroke="#f0d060" stroke-width="2.6"/><path d="M14.07 7.14A5.0 5.0 0 0 1 14.86 10.51" fill="none" stroke="#e8e8c0" stroke-width="2.6"/><path d="M14.90 10.11A5.0 5.0 0 0 1 13.56 13.31" fill="none" stroke="#60c060" stroke-width="2.6"/><path d="M13.82 13.01A5.0 5.0 0 0 1 10.85 14.81" fill="none" stroke="#40c0c0" stroke-width="2.6"/><path d="M11.24 14.72A5.0 5.0 0 0 1 7.79 14.43" fill="none" stroke="#3050f0" stroke-width="2.6"/><path d="M8.15 14.59A5.0 5.0 0 0 1 5.53 12.32" fill="none" stroke="#2020d0" stroke-width="2.6"/><path d="M5.73 12.66A5.0 5.0 0 0 1 4.94 9.29" fill="none" stroke="#9040c0" stroke-width="2.6"/><path d="M4.90 9.69A5.0 5.0 0 0 1 6.24 6.49" fill="none" stroke="#e04080" stroke-width="2.6"/></svg>
<div class="a" style="left:458.20px;top:507.70px;width:19.60px;height:19.60px;background:#dddddd;border:1px solid #adadad;box-sizing:border-box;"></div>
<span class="t" style="left:463.66px;top:509.00px;font-size:13px;line-height:17px;color:#0a0a0a;font-weight:bold;">X</span>
<span class="t" style="left:489.30px;top:510.00px;font-size:12px;line-height:16px;color:#111;letter-spacing:-0.400px;">7.</span>
<div class="a" style="left:501.10px;top:509.60px;width:15.80px;height:15.70px;background:#1a9a5a;border:1px solid #b9b9b9;box-sizing:border-box;"></div>
<div class="a" style="left:519.10px;top:509.60px;width:15.80px;height:15.70px;background:#8a42a2;border:1px solid #b9b9b9;box-sizing:border-box;"></div>
<div class="a" style="left:537.10px;top:509.60px;width:15.80px;height:15.70px;background:#829ac2;border:1px solid #b9b9b9;box-sizing:border-box;"></div>
<div class="a" style="left:555.10px;top:509.60px;width:15.80px;height:15.70px;background:#aaea9a;border:1px solid #b9b9b9;box-sizing:border-box;"></div>
<div class="a" style="left:573.10px;top:509.60px;width:15.80px;height:15.70px;background:#9a4212;border:1px solid #b9b9b9;box-sizing:border-box;"></div>
<div class="a" style="left:591.10px;top:509.60px;width:15.80px;height:15.70px;background:#ea9232;border:1px solid #b9b9b9;box-sizing:border-box;"></div>
<div class="a" style="left:618.00px;top:509.50px;width:16.00px;height:16.00px;background:#b29242;border:1px solid #606060;box-sizing:border-box;"></div>
<div class="a" style="left:644.20px;top:507.70px;width:19.60px;height:19.60px;background:#dddddd;border:1px solid #adadad;box-sizing:border-box;"></div>
<svg class="a" style="left:644.20px;top:507.70px;" width="20" height="20" viewBox="0 0 20 20"><path d="M10 4V16M4 10H16" stroke="#3c3c3c" stroke-width="1.5"/></svg>
<div class="a" style="left:666.20px;top:507.70px;width:19.70px;height:19.60px;background:#dddddd;border:1px solid #adadad;box-sizing:border-box;"></div>
<svg class="a" style="left:666.20px;top:507.70px;" width="20" height="20" viewBox="0 0 20 20"><path d="M5.98 6.79A5.0 5.0 0 0 1 8.95 4.99" fill="none" stroke="#f02020" stroke-width="2.6"/><path d="M8.56 5.08A5.0 5.0 0 0 1 12.01 5.37" fill="none" stroke="#f08030" stroke-width="2.6"/><path d="M11.65 5.21A5.0 5.0 0 0 1 14.27 7.48" fill="none" stroke="#f0d060" stroke-width="2.6"/><path d="M14.07 7.14A5.0 5.0 0 0 1 14.86 10.51" fill="none" stroke="#e8e8c0" stroke-width="2.6"/><path d="M14.90 10.11A5.0 5.0 0 0 1 13.56 13.31" fill="none" stroke="#60c060" stroke-width="2.6"/><path d="M13.82 13.01A5.0 5.0 0 0 1 10.85 14.81" fill="none" stroke="#40c0c0" stroke-width="2.6"/><path d="M11.24 14.72A5.0 5.0 0 0 1 7.79 14.43" fill="none" stroke="#3050f0" stroke-width="2.6"/><path d="M8.15 14.59A5.0 5.0 0 0 1 5.53 12.32" fill="none" stroke="#2020d0" stroke-width="2.6"/><path d="M5.73 12.66A5.0 5.0 0 0 1 4.94 9.29" fill="none" stroke="#9040c0" stroke-width="2.6"/><path d="M4.90 9.69A5.0 5.0 0 0 1 6.24 6.49" fill="none" stroke="#e04080" stroke-width="2.6"/></svg>
<div class="a" style="left:458.20px;top:533.80px;width:19.60px;height:19.60px;background:#dddddd;border:1px solid #adadad;box-sizing:border-box;"></div>
<span class="t" style="left:463.66px;top:535.00px;font-size:13px;line-height:17px;color:#0a0a0a;font-weight:bold;">X</span>
<span class="t" style="left:489.30px;top:536.00px;font-size:12px;line-height:16px;color:#111;letter-spacing:-0.400px;">8.</span>
<div class="a" style="left:501.10px;top:535.70px;width:15.80px;height:15.70px;background:#b29242;border:1px solid #b9b9b9;box-sizing:border-box;"></div>
<div class="a" style="left:519.10px;top:535.70px;width:15.80px;height:15.70px;background:#624a92;border:1px solid #b9b9b9;box-sizing:border-box;"></div>
<div class="a" style="left:537.10px;top:535.70px;width:15.80px;height:15.70px;background:#f2629a;border:1px solid #b9b9b9;box-sizing:border-box;"></div>
<div class="a" style="left:555.10px;top:535.70px;width:15.80px;height:15.70px;background:#d22a5a;border:1px solid #b9b9b9;box-sizing:border-box;"></div>
<div class="a" style="left:573.10px;top:535.70px;width:15.80px;height:15.70px;background:#a21a52;border:1px solid #b9b9b9;box-sizing:border-box;"></div>
<div class="a" style="left:591.10px;top:535.70px;width:15.80px;height:15.70px;background:#eab252;border:1px solid #b9b9b9;box-sizing:border-box;"></div>
<div class="a" style="left:618.00px;top:535.60px;width:16.00px;height:16.00px;background:#a2daf2;border:1px solid #306070;box-sizing:border-box;"></div>
<div class="a" style="left:644.20px;top:533.80px;width:19.60px;height:19.60px;background:#dddddd;border:1px solid #adadad;box-sizing:border-box;"></div>
<svg class="a" style="left:644.20px;top:533.80px;" width="20" height="20" viewBox="0 0 20 20"><path d="M10 4V16M4 10H16" stroke="#3c3c3c" stroke-width="1.5"/></svg>
<div class="a" style="left:666.20px;top:533.80px;width:19.70px;height:19.60px;background:#dddddd;border:1px solid #adadad;box-sizing:border-box;"></div>
<svg class="a" style="left:666.20px;top:533.80px;" width="20" height="20" viewBox="0 0 20 20"><path d="M5.98 6.79A5.0 5.0 0 0 1 8.95 4.99" fill="none" stroke="#f02020" stroke-width="2.6"/><path d="M8.56 5.08A5.0 5.0 0 0 1 12.01 5.37" fill="none" stroke="#f08030" stroke-width="2.6"/><path d="M11.65 5.21A5.0 5.0 0 0 1 14.27 7.48" fill="none" stroke="#f0d060" stroke-width="2.6"/><path d="M14.07 7.14A5.0 5.0 0 0 1 14.86 10.51" fill="none" stroke="#e8e8c0" stroke-width="2.6"/><path d="M14.90 10.11A5.0 5.0 0 0 1 13.56 13.31" fill="none" stroke="#60c060" stroke-width="2.6"/><path d="M13.82 13.01A5.0 5.0 0 0 1 10.85 14.81" fill="none" stroke="#40c0c0" stroke-width="2.6"/><path d="M11.24 14.72A5.0 5.0 0 0 1 7.79 14.43" fill="none" stroke="#3050f0" stroke-width="2.6"/><path d="M8.15 14.59A5.0 5.0 0 0 1 5.53 12.32" fill="none" stroke="#2020d0" stroke-width="2.6"/><path d="M5.73 12.66A5.0 5.0 0 0 1 4.94 9.29" fill="none" stroke="#9040c0" stroke-width="2.6"/><path d="M4.90 9.69A5.0 5.0 0 0 1 6.24 6.49" fill="none" stroke="#e04080" stroke-width="2.6"/></svg>
<div class="a" style="left:703.60px;top:268.20px;width:223.00px;height:242.20px;background:#ececec;border:1px solid #b4b4b4;box-sizing:border-box;"></div>
<div class="a" style="left:709.70px;top:274.70px;width:199.50px;height:100.40px;background:linear-gradient(to bottom,rgba(0,0,0,0),#000),linear-gradient(to right,#fff,#f00)"></div>
<div class="a" style="left:913.50px;top:274.70px;width:7.70px;height:128.00px;background:linear-gradient(to bottom,#f01010 0%,#f02818 5%,#e89838 9%,#f0c070 13%,#f8f0a8 17%,#c8e8a0 21%,#78d070 24%,#78d070 44%,#a8e8c8 48%,#98e8f0 52%,#48a0f0 57%,#1838f0 61%,#1828e8 69%,#5058d8 72%,#a890f0 76%,#b090f0 83%,#e080b8 87%,#f05070 91%,#f01838 95%,#f01030 100%)"></div>
<svg class="a" style="left:913.00px;top:396.50px;" width="9" height="7" viewBox="0 0 9 7"><path d="M0.5 0.5L7 4.5L0.5 6.5Z" fill="#000"/></svg>
<div class="a" style="left:711.00px;top:381.30px;width:96.00px;height:21.40px;background:#ebebeb;border:1px solid #c6c6c6;box-sizing:border-box;"></div>
<span class="t" style="left:710.50px;top:421.00px;font-size:12px;line-height:16px;color:#7c7c7c;">R</span>
<div class="a" style="left:732.00px;top:428.00px;width:134.50px;height:2.60px;background:#e2e2e2;border:1px solid #d6d6d6;box-sizing:border-box;"></div>
<div class="a" style="left:722.30px;top:420.80px;width:10.20px;height:16.60px;background:#efefef;border:1px solid #d2d2d2;box-sizing:border-box;"></div>
<div class="a" style="left:876.50px;top:419.60px;width:43.00px;height:19.20px;background:#ececec;border:1px solid #bcbcbc;box-sizing:border-box;"></div>
<span class="t" style="left:894.27px;top:420.00px;font-size:13px;line-height:17px;color:#767676;">0</span>
<svg class="a" style="left:904.00px;top:421.20px;" width="13" height="16" viewBox="0 0 13 16"><path d="M2.5 6L6.5 2.5L10.5 6M2.5 10L6.5 13.5L10.5 10" fill="none" stroke="#b0b0b0" stroke-width="1.3"/><path d="M0.5 0V16M0.5 8H13" stroke="#cfcfcf" stroke-width="0.8"/></svg>
<span class="t" style="left:710.50px;top:451.00px;font-size:12px;line-height:16px;color:#7c7c7c;">G</span>
<div class="a" style="left:732.00px;top:458.10px;width:134.50px;height:2.60px;background:#e2e2e2;border:1px solid #d6d6d6;box-sizing:border-box;"></div>
<div class="a" style="left:722.30px;top:450.90px;width:10.20px;height:16.60px;background:#efefef;border:1px solid #d2d2d2;box-sizing:border-box;"></div>
<div class="a" style="left:876.50px;top:449.70px;width:43.00px;height:19.20px;background:#ececec;border:1px solid #bcbcbc;box-sizing:border-box;"></div>
<span class="t" style="left:894.27px;top:451.00px;font-size:13px;line-height:17px;color:#767676;">0</span>
<svg class="a" style="left:904.00px;top:451.30px;" width="13" height="16" viewBox="0 0 13 16"><path d="M2.5 6L6.5 2.5L10.5 6M2.5 10L6.5 13.5L10.5 10" fill="none" stroke="#b0b0b0" stroke-width="1.3"/><path d="M0.5 0V16M0.5 8H13" stroke="#cfcfcf" stroke-width="0.8"/></svg>
<span class="t" style="left:710.50px;top:481.00px;font-size:12px;line-height:16px;color:#7c7c7c;">B</span>
<div class="a" style="left:732.00px;top:488.20px;width:134.50px;height:2.60px;background:#e2e2e2;border:1px solid #d6d6d6;box-sizing:border-box;"></div>
<div class="a" style="left:722.30px;top:481.00px;width:10.20px;height:16.60px;background:#efefef;border:1px solid #d2d2d2;box-sizing:border-box;"></div>
<div class="a" style="left:876.50px;top:479.80px;width:43.00px;height:19.20px;background:#ececec;border:1px solid #bcbcbc;box-sizing:border-box;"></div>
<span class="t" style="left:894.27px;top:481.00px;font-size:13px;line-height:17px;color:#767676;">0</span>
<svg class="a" style="left:904.00px;top:481.40px;" width="13" height="16" viewBox="0 0 13 16"><path d="M2.5 6L6.5 2.5L10.5 6M2.5 10L6.5 13.5L10.5 10" fill="none" stroke="#b0b0b0" stroke-width="1.3"/><path d="M0.5 0V16M0.5 8H13" stroke="#cfcfcf" stroke-width="0.8"/></svg>
<div class="a" style="left:453.70px;top:867.50px;width:472.20px;height:77.80px;border:1px solid #d4dfe6;box-sizing:border-box;border-radius:3px"></div>
<div class="a" style="left:464.00px;top:860.00px;width:86.00px;height:12.00px;background:#fff;"></div>
<span class="t" style="left:471.20px;top:857.00px;font-size:12px;line-height:16px;color:#0a0a0a;letter-spacing:-0.214px;font-weight:bold;">Color coding</span>
<span class="t" style="left:468.00px;top:887.00px;font-size:12px;line-height:16px;color:#111;letter-spacing:0.041px;">Coloring type:</span>
<div class="a" style="left:468.00px;top:907.20px;width:169.70px;height:23.30px;background:#f3f3f3;border:1px solid #a8a8a8;box-sizing:border-box;"></div>
<span class="t" style="left:474.00px;top:912.00px;font-size:12px;line-height:16px;color:#111;letter-spacing:-0.010px;">String level coloring</span>
<svg class="a" style="left:624.50px;top:917.00px;" width="7" height="5" viewBox="0 0 7 5"><path d="M0.7 0.7L3.5 3.6L6.3 0.7" fill="none" stroke="#555" stroke-width="1.1"/></svg>
<div class="a" style="left:695.00px;top:907.20px;width:104.80px;height:23.30px;background:#dddddd;border:1px solid #adadad;box-sizing:border-box;"></div>
<span class="t" style="left:732.93px;top:912.00px;font-size:12px;line-height:16px;color:#111;letter-spacing:0.062px;">Color</span>
<div class="a" style="left:809.90px;top:907.20px;width:105.90px;height:23.30px;background:#dddddd;border:1px solid #adadad;box-sizing:border-box;"></div>
<span class="t" style="left:818.32px;top:912.00px;font-size:12px;line-height:16px;color:#111;letter-spacing:-0.070px;">Remove coloring</span>
<svg class="a" style="left:760.00px;top:350.00px;" width="24" height="30" viewBox="0 0 24 30"><path d="M6.3 5.3V21.3L9.9 17.9L12.5 23.8L14.9 22.7L12.3 16.9L17.3 16.5Z" fill="#fff" stroke="#000" stroke-width="1"/></svg>
</body></html>
